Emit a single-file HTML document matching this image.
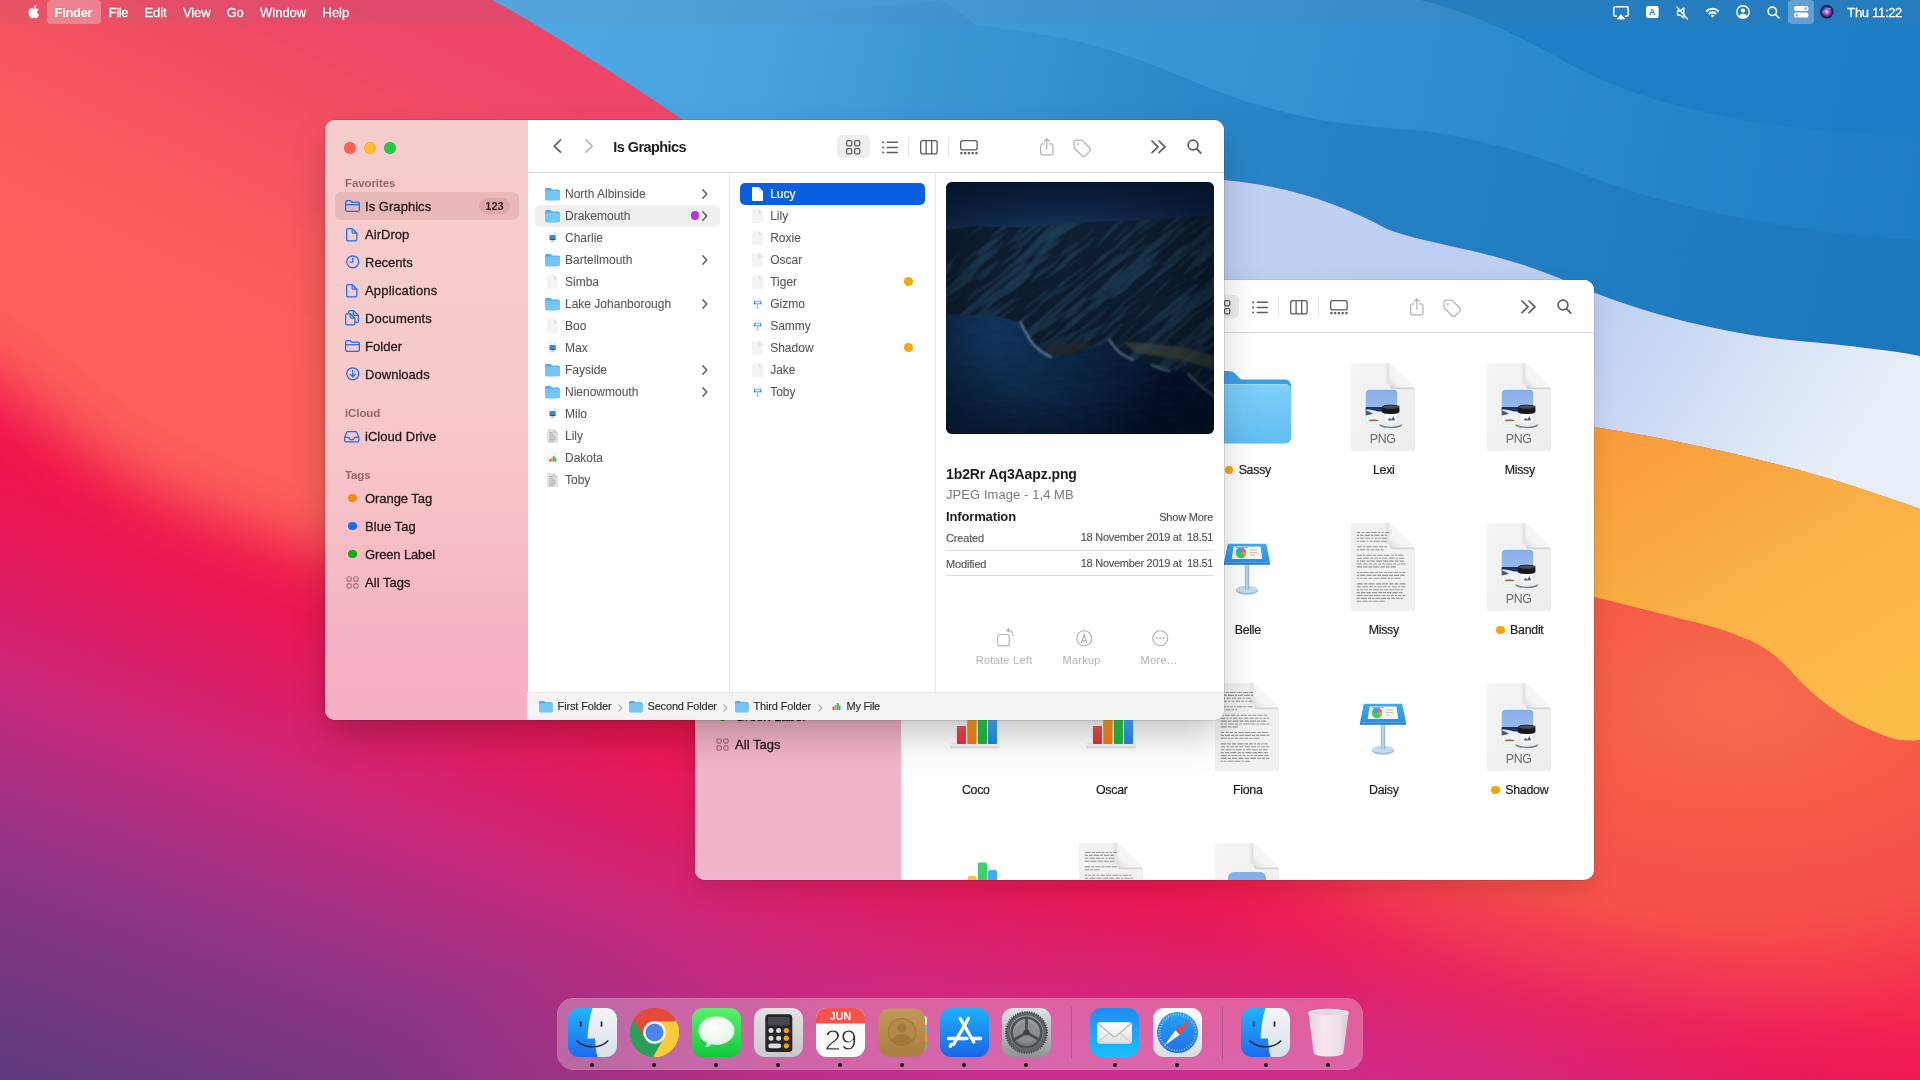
<!DOCTYPE html>
<html lang="en"><head><meta charset="utf-8"><title>Finder</title>
<style>
html,body{margin:0;padding:0;width:1920px;height:1080px;overflow:hidden;background:#e8205a;font-family:"Liberation Sans",sans-serif;}
#wall{position:absolute;left:0;top:0;}
</style>
<style>
*{box-sizing:border-box}
.abs{position:absolute}
#menubar{position:absolute;left:0;top:0;width:1920px;height:24px;background:rgba(120,120,140,0.10);color:#fff;font-size:13px;line-height:24px;white-space:nowrap}
#menubar span{position:absolute;top:0.5px;-webkit-text-stroke:0.3px #fff;text-shadow:0 0 2px rgba(0,0,0,0.12)}
#menubar .hl{position:absolute;background:rgba(255,255,255,0.28);border-radius:4px}
#menubar svg{position:absolute;overflow:visible}
.win{position:absolute;width:898.7px;height:600px;border-radius:10px;box-shadow:0 0 0 0.5px rgba(0,0,0,0.18),0 18px 38px -5px rgba(0,0,0,0.25),0 2px 8px rgba(0,0,0,0.04);overflow:hidden;background:#fff}
.sb{position:absolute;left:0;top:0;height:600px;font-size:13px;color:#241618;white-space:nowrap}
.sb .hd{position:absolute;left:20px;font-size:11.5px;font-weight:700;color:rgba(90,40,50,0.62);letter-spacing:-0.1px}
.sb .it{position:absolute;left:10px;width:184px;height:28px;border-radius:6px;line-height:28px}
.sb .it.sel{background:rgba(140,60,70,0.13)}
.sb .it span.t{position:absolute;left:30px;top:0.8px;-webkit-text-stroke:0.28px #241618;letter-spacing:0.04px}
.sb .it svg{position:absolute;overflow:visible}
.sb .badge{position:absolute;left:144px;top:6px;width:31px;height:16px;border-radius:8px;background:rgba(140,60,70,0.12);font-size:11px;line-height:16px;text-align:center;font-weight:700;color:#3a2428}
.sb .dot{position:absolute;left:13.2px;top:9.7px;width:8.7px;height:8.7px;border-radius:50%}
.tl{position:absolute;top:22px;width:12px;height:12px;border-radius:50%}
.tb{position:absolute;top:0;height:53px;background:#fff;border-bottom:1px solid #dedede}
.tb svg{position:absolute;overflow:visible}
.tb .title{position:absolute;top:18px;font-size:14.5px;font-weight:700;color:#1d1d1f;letter-spacing:-0.55px;line-height:18px;white-space:nowrap}
.tb .gbtn{position:absolute;left:310px;top:14.5px;width:32.5px;height:23.5px;border-radius:5px;background:#eeeeee}
.tb .sep{position:absolute;top:16.5px;width:1px;height:20px;background:#e2e2e2}
.col{position:absolute;top:53px;background:#fff}
.row{position:absolute;height:22px;line-height:22px;font-size:12px;color:#575757;white-space:nowrap}
.row .t{position:absolute;top:0;-webkit-text-stroke:0.08px #575757}
.row svg{position:absolute;overflow:visible}
.pv{font-size:11px;color:#555;white-space:nowrap}
.pv .k,.pv .v{position:absolute;-webkit-text-stroke:0.15px #555}
.pathbar{position:absolute;height:28px;background:#f4f4f4;border-top:1px solid #e9e9e9;font-size:11px;color:#2e2e2e;line-height:28px;white-space:nowrap}
.pathbar span{position:absolute;top:-1px;-webkit-text-stroke:0.15px #2e2e2e}
.pathbar svg{position:absolute;overflow:visible}
.ic{position:absolute}
.lbl{position:absolute;font-size:12.4px;letter-spacing:-0.28px;color:#1e1e1e;white-space:nowrap;line-height:16px;-webkit-text-stroke:0.2px #1e1e1e}
.lbl i{display:inline-block;width:8.5px;height:8.5px;border-radius:50%;background:#f5a60a;margin-right:5.5px;vertical-align:0.3px}
#dock{position:absolute;left:557px;top:998px;width:806px;height:72px;border-radius:17px;background:rgba(255,255,255,0.27);box-shadow:0 0 0 0.5px rgba(255,255,255,0.18) inset}
#dock .di{position:absolute;top:10px;width:49px;height:49px}
#dock .dd{position:absolute;top:65px;width:4px;height:4px;border-radius:50%;background:#111}
#dock .ds{position:absolute;top:9px;width:1px;height:52px;background:rgba(60,20,60,0.22)}
#w2{box-shadow:0 0 0 0.5px rgba(0,0,0,0.14),0 10px 28px -4px rgba(0,0,0,0.15)}
.win,#menubar,#dock{will-change:transform}
</style>
</head><body>
<svg id="wall" width="1920" height="1080" viewBox="0 0 1920 1080">
<defs>
  <linearGradient id="gBase" gradientUnits="userSpaceOnUse" x1="0" y1="1080" x2="235" y2="420.600">
    <stop offset="0" stop-color="#5c3a80"/>
    <stop offset="0.13" stop-color="#73387f"/>
    <stop offset="0.27" stop-color="#8a3583"/>
    <stop offset="0.40" stop-color="#a82f84"/>
    <stop offset="0.51" stop-color="#c42a7c"/>
    <stop offset="0.58" stop-color="#d22474"/>
    <stop offset="0.65" stop-color="#dc1e66"/>
    <stop offset="0.75" stop-color="#e81856"/>
    <stop offset="0.86" stop-color="#f0144a"/>
    <stop offset="0.95" stop-color="#f51a50"/>
    <stop offset="1" stop-color="#f3224e"/>
  </linearGradient>
  <radialGradient id="gMag" gradientUnits="userSpaceOnUse" cx="1180" cy="1130" r="260" gradientTransform="translate(1180 1130) scale(3.200 1) translate(-1180 -1130)">
    <stop offset="0" stop-color="#c8309a" stop-opacity="0.900"/>
    <stop offset="0.450" stop-color="#cc2e90" stop-opacity="0.600"/>
    <stop offset="0.750" stop-color="#d42a84" stop-opacity="0.250"/>
    <stop offset="1" stop-color="#d82880" stop-opacity="0"/>
  </radialGradient>
  
  <linearGradient id="gCoral" gradientUnits="userSpaceOnUse" x1="330" y1="-10" x2="170" y2="330">
    <stop offset="0" stop-color="#ee4469"/>
    <stop offset="0.300" stop-color="#f34e63"/>
    <stop offset="0.650" stop-color="#f95b5d"/>
    <stop offset="1" stop-color="#fb615a"/>
  </linearGradient>
  <linearGradient id="gBlue" gradientUnits="userSpaceOnUse" x1="500" y1="0" x2="1920" y2="300">
    <stop offset="0" stop-color="#52aae4"/>
    <stop offset="0.35" stop-color="#3f9ad8"/>
    <stop offset="0.7" stop-color="#2b8bce"/>
    <stop offset="1" stop-color="#1d7cc2"/>
  </linearGradient>
  <linearGradient id="gBandB" gradientUnits="userSpaceOnUse" x1="780" y1="0" x2="1300" y2="120">
    <stop offset="0" stop-color="#1a74b8" stop-opacity="0"/>
    <stop offset="0.500" stop-color="#1a74b8" stop-opacity="0.220"/>
    <stop offset="1" stop-color="#1a74b8" stop-opacity="0.520"/>
  </linearGradient>
  <linearGradient id="gLav" gradientUnits="userSpaceOnUse" x1="1300" y1="200" x2="1800" y2="520">
    <stop offset="0" stop-color="#bfd0f3"/>
    <stop offset="0.5" stop-color="#bccef2"/>
    <stop offset="1" stop-color="#e8eff8"/>
  </linearGradient>
  <linearGradient id="gOrange" gradientUnits="userSpaceOnUse" x1="1600" y1="430" x2="1800" y2="760">
    <stop offset="0" stop-color="#f89a3c"/>
    <stop offset="0.5" stop-color="#fab044"/>
    <stop offset="1" stop-color="#fcbc48"/>
  </linearGradient>
  <radialGradient id="gRed" gradientUnits="userSpaceOnUse" cx="1740" cy="700" r="400" gradientTransform="translate(1740 700) scale(1.700 1) translate(-1740 -700)">
    <stop offset="0" stop-color="#f56c4c"/>
    <stop offset="0.300" stop-color="#f65a49"/>
    <stop offset="0.550" stop-color="#f7504a"/>
    <stop offset="0.720" stop-color="#f53c4d" stop-opacity="0.850"/>
    <stop offset="0.880" stop-color="#f32450" stop-opacity="0.400"/>
    <stop offset="1" stop-color="#f01c55" stop-opacity="0"/>
  </radialGradient>
  <filter id="b30" x="-20%" y="-20%" width="140%" height="140%"><feGaussianBlur stdDeviation="30"/></filter>
  <filter id="b60" x="-30%" y="-30%" width="160%" height="160%"><feGaussianBlur stdDeviation="60"/></filter>
  <filter id="b20" filterUnits="userSpaceOnUse" x="-200" y="-200" width="1300" height="1100"><feGaussianBlur stdDeviation="30"/></filter>
  <filter id="b8" x="-10%" y="-10%" width="120%" height="120%"><feGaussianBlur stdDeviation="8"/></filter>
</defs>
<rect width="1920" height="1080" fill="url(#gBase)"/>

<!-- right red body -->
<rect x="700" y="100" width="1220" height="980" fill="url(#gRed)"/>
<rect x="0" y="700" width="1920" height="380" fill="url(#gMag)"/>
<!-- coral blob top-left -->
<path d="M-100 -100 L800 -100 L800 660 L440 660 C410 610 370 570 330 556 C300 546 268 538 244 528 C212 516 182 506 155 492 C125 476 100 460 80 444 C50 420 20 396 0 380 L-100 310Z" fill="url(#gCoral)" filter="url(#b20)"/>
<!-- blue -->
<path d="M492 0 C540 26 600 64 683 120 L900 300 L1224 180 C1290 186 1340 204 1387 229 C1430 246 1500 250 1575 285 C1640 312 1720 334 1800 341 C1850 346 1890 350 1920 356 L1920 0Z" fill="url(#gBlue)"/>
<!-- blue layers -->
<path d="M1421 0 C1470 12 1520 36 1575 67 C1620 90 1660 102 1700 111 C1780 130 1860 134 1920 137 L1920 0Z" fill="#1c7cc4" opacity="0.85"/>
<path d="M940 0 C960 12 970 20 975 24 C1010 30 1050 34 1092 45 C1140 58 1180 76 1217 91 C1250 104 1290 114 1320 120 C1360 126 1390 128 1425 131 C1480 140 1520 150 1560 165 C1640 198 1720 216 1800 228 C1850 236 1890 238 1920 240 L1920 356 C1890 350 1850 346 1800 341 C1720 334 1640 312 1575 285 C1500 250 1430 246 1387 229 C1340 204 1290 186 1224 180 L900 300 L683 120 L560 40Z" fill="url(#gBandB)"/>
<!-- lavender -->
<path d="M1100 170 L1224 180 C1290 186 1340 204 1387 229 C1430 246 1500 250 1575 285 C1640 312 1720 334 1800 341 C1850 346 1890 350 1920 356 L1920 509 C1890 498 1870 492 1856 487 C1810 472 1770 462 1722 451 C1680 442 1640 434 1594 427 L1100 427Z" fill="url(#gLav)"/>
<!-- orange -->
<path d="M1100 400 L1594 427 C1640 434 1680 442 1722 451 C1770 462 1810 472 1856 487 C1870 492 1890 498 1920 509 L1920 740 C1900 742 1890 738 1878 733 C1860 726 1845 718 1833 709 C1815 696 1802 684 1789 669 C1775 654 1762 645 1744 638 C1720 628 1700 623 1678 618 C1650 611 1620 603 1594 597 L1100 597Z" fill="url(#gOrange)"/>
</svg>
<div id="menubar">
<div class="hl" style="left:47px;top:0;width:53.5px;height:24px"></div>
<svg style="left:28px;top:5px" width="11.5" height="14.2" viewBox="0 0 384 512"><path fill="#fff" transform="translate(0 -32) scale(1 1.06)" d="M318.7 268.7c-.2-36.700 16.400-64.400 50-84.800-18.800-26.900-47.200-41.700-84.700-44.600-35.500-2.800-74.300 20.700-88.500 20.700-15 0-49.400-19.700-76.400-19.700C63.300 141.200 4 184.800 4 273.500q0 39.300 14.400 81.200c12.800 36.700 59 126.700 107.200 125.200 25.200-.6 43-17.900 75.800-17.900 31.800 0 48.300 17.900 76.400 17.900 48.600-.7 90.400-82.500 102.600-119.300-65.200-30.700-61.700-90-61.700-91.900zm-56.600-164.200c27.300-32.400 24.800-61.900 24-72.500-24.100 1.400-52 16.400-67.900 34.900-17.500 19.800-27.800 44.300-25.600 71.900 26.100 2 49.900-11.400 69.500-34.300z"/></svg>
<span style="left:54.6px;font-weight:700;letter-spacing:-0.33px;-webkit-text-stroke:0">Finder</span>
<span style="left:108.7px;letter-spacing:-0.35px">File</span>
<span style="left:144.6px;letter-spacing:-0.15px">Edit</span>
<span style="left:182.9px;letter-spacing:-0.1px">View</span>
<span style="left:226.7px;letter-spacing:-0.4px">Go</span>
<span style="left:260px">Window</span>
<span style="left:322.5px">Help</span>
<!-- right icons -->
<svg style="left:1612.5px;top:5.5px" width="16" height="14" viewBox="0 0 16 14" fill="none" stroke="#fff" stroke-width="1.5" stroke-linejoin="round"><path d="M4 10.2H2.2c-.8 0-1.400-.6-1.400-1.400V2.200c0-.8.600-1.400 1.400-1.400h11.600c.8 0 1.400.6 1.400 1.400v6.600c0 .8-.6 1.400-1.400 1.400H12"/><path d="M8 8.400l3.600 4.600H4.400z" fill="#fff" stroke-width="0.8"/></svg>
<svg style="left:1645.8px;top:6.3px" width="12.6" height="12" viewBox="0 0 12.6 12"><rect width="12.6" height="12" rx="2.200" fill="#fff"/><text x="6.3" y="9.300" text-anchor="middle" font-family="Liberation Sans, sans-serif" font-size="8.500" font-weight="700" fill="#2a82c8">A</text></svg>
<svg style="left:1676px;top:5.500px" width="13" height="14" viewBox="0 0 13 14" fill="none" stroke="#fff" stroke-width="1.300" stroke-linejoin="round" stroke-linecap="round"><path d="M1.500 5h2.500l3.800-3v10l-3.800-3H1.500z"/><path d="M1 1l10.500 12" stroke-width="1.200"/></svg>
<svg style="left:1704.5px;top:6.800px" width="15" height="11" viewBox="0 0 15 11" fill="none" stroke="#fff" stroke-width="2.100" stroke-linecap="butt"><path d="M1.300 4.400a8.700 8.700 0 0 1 12.400 0"/><path d="M3.850 6.900a5.100 5.100 0 0 1 7.300 0"/><path d="M7.500 10.600L5.700 8.600a2.600 2.600 0 0 1 3.600 0z" fill="#fff" stroke="none"/></svg>
<svg style="left:1736px;top:5px" width="14" height="14" viewBox="0 0 14 14" fill="none" stroke="#fff" stroke-width="1.400"><circle cx="7" cy="7" r="6.200"/><circle cx="7" cy="5.500" r="2.100" fill="#fff" stroke="none"/><path d="M2.900 11.300c.8-1.900 2.300-2.800 4.100-2.800s3.300.9 4.100 2.800c-1.100 1-2.500 1.600-4.100 1.600s-3-.6-4.100-1.600z" fill="#fff" stroke="none"/></svg>
<svg style="left:1767px;top:5.500px" width="13" height="13" viewBox="0 0 13 13" fill="none" stroke="#fff" stroke-width="1.600" stroke-linecap="round"><circle cx="5.300" cy="5.300" r="4.200"/><path d="M8.500 8.500l3.500 3.500"/></svg>
<div class="hl" style="left:1788px;top:0;width:26px;height:24px"></div>
<svg style="left:1793.7px;top:6.300px" width="14.500" height="11.500" viewBox="0 0 14.500 11.500"><rect x="0" y="0" width="14.500" height="5.100" rx="2.550" fill="#fff"/><rect x="0" y="6.400" width="14.500" height="5.100" rx="2.550" fill="#fff"/><circle cx="11.700" cy="2.550" r="1.500" fill="#8fbfe3"/><circle cx="2.800" cy="8.950" r="1.500" fill="#8fbfe3"/></svg>
<svg style="left:1819.500px;top:5.200px" width="13.500" height="13.500" viewBox="0 0 14 14"><defs><radialGradient id="siri" cx="0.500" cy="0.500" r="0.500"><stop offset="0" stop-color="#f2f2ff"/><stop offset="0.250" stop-color="#ff5fa0"/><stop offset="0.550" stop-color="#7a3fd0"/><stop offset="0.800" stop-color="#1e2a6a"/><stop offset="1" stop-color="#1a1a3a"/></radialGradient></defs><circle cx="7" cy="7" r="7" fill="#1b1b40"/><circle cx="7" cy="7" r="6.800" fill="url(#siri)"/><path d="M2.500 8.500c2-3 4.500-4.500 9-5" stroke="#40d0ff" stroke-width="1.200" fill="none" opacity="0.700"/></svg>
<span style="left:1847.300px;letter-spacing:-0.32px">Thu 11:22</span>
</div>
<div class="win" id="w2" style="left:695px;top:280px">
<svg width="0" height="0" style="position:absolute"><defs>
<linearGradient id="docg" x1="0" y1="0" x2="1" y2="1"><stop offset="0" stop-color="#f4f4f4"/><stop offset="1" stop-color="#ededed"/></linearGradient>
<linearGradient id="foldg" x1="0" y1="1" x2="1" y2="0"><stop offset="0" stop-color="#d8d8d8"/><stop offset="0.250" stop-color="#f3f3f3"/><stop offset="1" stop-color="#ffffff"/></linearGradient>
<linearGradient id="fedge" x1="0" y1="0" x2="1" y2="0"><stop offset="0" stop-color="#000" stop-opacity="0"/><stop offset="1" stop-color="#000" stop-opacity="0.080"/></linearGradient>
<linearGradient id="fold1" x1="0" y1="0" x2="0" y2="1"><stop offset="0" stop-color="#3f9fe6"/><stop offset="1" stop-color="#3a98e0"/></linearGradient>
<linearGradient id="fold2" x1="0" y1="0" x2="0" y2="1"><stop offset="0" stop-color="#7dd0fa"/><stop offset="1" stop-color="#62bdf3"/></linearGradient>
<linearGradient id="kn1" x1="0" y1="0" x2="0" y2="1"><stop offset="0" stop-color="#42a9f2"/><stop offset="1" stop-color="#2a8fe3"/></linearGradient>
<linearGradient id="kn2" x1="0" y1="0" x2="1" y2="0"><stop offset="0" stop-color="#8eb4cf"/><stop offset="0.500" stop-color="#c8dcea"/><stop offset="1" stop-color="#86a9c4"/></linearGradient>
<linearGradient id="br" x1="0" y1="0" x2="0" y2="1"><stop offset="0" stop-color="#f0575a"/><stop offset="1" stop-color="#ea2c34"/></linearGradient>
<linearGradient id="bo" x1="0" y1="0" x2="0" y2="1"><stop offset="0" stop-color="#f7a928"/><stop offset="1" stop-color="#f47a14"/></linearGradient>
<linearGradient id="bg" x1="0" y1="0" x2="0" y2="1"><stop offset="0" stop-color="#3fd45e"/><stop offset="1" stop-color="#1db63a"/></linearGradient>
<linearGradient id="bb" x1="0" y1="0" x2="0" y2="1"><stop offset="0" stop-color="#4fb4f8"/><stop offset="1" stop-color="#2082f0"/></linearGradient>
<linearGradient id="pvs" x1="0" y1="0" x2="0" y2="1"><stop offset="0" stop-color="#86aee8"/><stop offset="1" stop-color="#a9c6f0"/></linearGradient>
</defs></svg>
<div class="sb" style="width:205.6px;background:linear-gradient(180deg,#f6c6d2 0%,#f4b8c9 40%,#f3b2c6 70%,#f1b5cc 100%)">
<div class="tl" style="left:19.3px;background:#fe5f57;box-shadow:0 0 0 0.5px rgba(0,0,0,0.12) inset"></div>
<div class="tl" style="left:39.3px;background:#febc2e;box-shadow:0 0 0 0.5px rgba(0,0,0,0.12) inset"></div>
<div class="tl" style="left:59.3px;background:#28c840;box-shadow:0 0 0 0.5px rgba(0,0,0,0.12) inset"></div>
<div class="hd" style="top:58.5px;line-height:15px">Favorites</div>
<div class="it sel" style="top:74.5px"><svg style="left:9.5px;top:8px" width="15" height="12" viewBox="0 0 15 12" fill="none" stroke="#1d6cf2" stroke-width="1.250" stroke-linejoin="round"><path d="M.65 2.100c0-.8.650-1.450 1.450-1.450h2.700c.5 0 .9.200 1.200.55l.7.850h6.200c.8 0 1.450.65 1.450 1.450v6.400c0 .8-.65 1.450-1.450 1.450H2.100c-.8 0-1.450-.65-1.450-1.450z"/><path d="M.65 4.700h13.700"/></svg><span class="t">Is Graphics</span><div class="badge">123</div></div>
<div class="it" style="top:102.5px"><svg style="left:11.3px;top:7.5px" width="11.500" height="13.500" viewBox="0 0 11.500 13.500" fill="none" stroke="#1d6cf2" stroke-width="1.250" stroke-linejoin="round"><path d="M.65 2.100c0-.8.650-1.450 1.450-1.450h4.200l4.550 4.550v6.200c0 .8-.65 1.450-1.450 1.450H2.100c-.8 0-1.450-.65-1.450-1.450z"/><path d="M6.100.85v3.100c0 .7.500 1.200 1.200 1.200h3.300"/></svg><span class="t">AirDrop</span></div>
<div class="it" style="top:130.5px"><svg style="left:10.5px;top:7.3px" width="13.500" height="13.500" viewBox="0 0 13.500 13.500" fill="none" stroke="#1d6cf2" stroke-width="1.250" stroke-linecap="round" stroke-linejoin="round"><circle cx="6.750" cy="6.750" r="6"/><path d="M6.750 3.200v3.800H3.900"/></svg><span class="t" style="letter-spacing:0.0px">Recents</span></div>
<div class="it" style="top:158.5px"><svg style="left:11.3px;top:7.5px" width="11.500" height="13.500" viewBox="0 0 11.500 13.500" fill="none" stroke="#1d6cf2" stroke-width="1.250" stroke-linejoin="round"><path d="M.65 2.100c0-.8.650-1.450 1.450-1.450h4.200l4.550 4.550v6.200c0 .8-.65 1.450-1.450 1.450H2.100c-.8 0-1.450-.65-1.450-1.450z"/><path d="M6.100.85v3.100c0 .7.500 1.200 1.200 1.200h3.300"/></svg><span class="t" style="letter-spacing:0.2px">Applications</span></div>
<div class="it" style="top:186.5px"><svg style="left:10px;top:6.3px" width="14" height="15.500" viewBox="0 0 14 15.500" fill="none" stroke="#1d6cf2" stroke-width="1.250" stroke-linejoin="round"><path d="M3.600 3.300V2.100c0-.8.650-1.450 1.450-1.450h3.500l4.800 4.800v5.500c0 .8-.65 1.450-1.450 1.450H10"/><path d="M8.300.85v3.200c0 .7.500 1.200 1.200 1.200h3.600"/><path d="M.65 5.200c0-.8.650-1.450 1.450-1.450h3.300L9.900 8.200v5.200c0 .8-.65 1.450-1.450 1.450H2.100c-.8 0-1.450-.65-1.450-1.450z"/><path d="M5.200 4v3c0 .7.500 1.200 1.200 1.200h3.300"/></svg><span class="t" style="letter-spacing:0.14px">Documents</span></div>
<div class="it" style="top:214.5px"><svg style="left:9.5px;top:8px" width="15" height="12" viewBox="0 0 15 12" fill="none" stroke="#1d6cf2" stroke-width="1.250" stroke-linejoin="round"><path d="M.65 2.100c0-.8.650-1.450 1.450-1.450h2.700c.5 0 .9.200 1.200.55l.7.850h6.200c.8 0 1.450.65 1.450 1.450v6.400c0 .8-.65 1.450-1.450 1.450H2.100c-.8 0-1.450-.65-1.450-1.450z"/><path d="M.65 4.700h13.700"/></svg><span class="t">Folder</span></div>
<div class="it" style="top:242.5px"><svg style="left:10.5px;top:7.3px" width="13.500" height="13.500" viewBox="0 0 13.500 13.500" fill="none" stroke="#1d6cf2" stroke-width="1.250" stroke-linecap="round" stroke-linejoin="round"><circle cx="6.750" cy="6.750" r="6"/><path d="M6.750 3.500v6.200M4.200 7.300l2.550 2.550L9.300 7.300"/></svg><span class="t">Downloads</span></div>
<div class="hd" style="top:288.5px;line-height:15px">iCloud</div>
<div class="it" style="top:304.5px"><svg style="left:9.3px;top:8.5px" width="15.500" height="11.500" viewBox="0 0 15.500 11.500" fill="none" stroke="#1d6cf2" stroke-width="1.250" stroke-linejoin="round"><path d="M.65 6.400L2.600 1.600c.25-.6.750-.95 1.400-.95h7.500c.65 0 1.150.35 1.400.95l1.950 4.800v3c0 .8-.65 1.450-1.450 1.450H2.100c-.8 0-1.450-.65-1.450-1.450z"/><path d="M.8 6.300h3.400c.5 0 .8.300.9.700.3 1.100 1.300 1.800 2.650 1.800s2.350-.7 2.650-1.800c.1-.4.400-.7.900-.7h3.400"/></svg><span class="t">iCloud Drive</span></div>
<div class="hd" style="top:350.5px;line-height:15px">Tags</div>
<div class="it" style="top:366.5px"><div class="dot" style="background:#f08c14"></div><span class="t" style="letter-spacing:-0.06px">Orange Tag</span></div>
<div class="it" style="top:394.5px"><div class="dot" style="background:#1a6cf6"></div><span class="t">Blue Tag</span></div>
<div class="it" style="top:422.5px"><div class="dot" style="background:#17a81c"></div><span class="t" style="letter-spacing:-0.14px">Green Label</span></div>
<div class="it" style="top:450.5px"><svg style="left:10.7px;top:7.7px" width="13" height="13" viewBox="0 0 13 13" fill="none" stroke="#a87280" stroke-width="1.100"><circle cx="3.100" cy="3.100" r="2.300"/><circle cx="9.900" cy="3.100" r="2.300"/><circle cx="3.100" cy="9.900" r="2.300"/><circle cx="9.900" cy="9.900" r="2.300"/></svg><span class="t">All Tags</span></div>
</div>
<div class="tb" style="left:205.6px;width:693.4px">
<svg style="left:22.599999999999994px;top:18.700px" width="8.500" height="14.200" viewBox="0 0 8.500 14.200" fill="none" stroke="#5c5c5c" stroke-width="1.700" stroke-linecap="round" stroke-linejoin="round"><path d="M7.500 1L1.200 7.100l6.300 6.100"/></svg>
<svg style="left:53.900000000000006px;top:18.700px" width="8.500" height="14.200" viewBox="0 0 8.500 14.200" fill="none" stroke="#b6b6b6" stroke-width="1.700" stroke-linecap="round" stroke-linejoin="round"><path d="M1 1l6.300 6.100L1 13.200"/></svg>
<div class="title" style="left:82.6px">Is Graphics</div>
<div class="gbtn" style="left:306.4px"></div>
<svg style="left:315.4px;top:19.600px" width="14.400" height="14.600" viewBox="0 0 14.400 14.600" fill="none" stroke="#5c5c5c" stroke-width="1.250"><rect x=".65" y=".65" width="5.100" height="5.200" rx="1.200"/><rect x="8.650" y=".65" width="5.100" height="5.200" rx="1.200"/><rect x=".65" y="8.750" width="5.100" height="5.200" rx="1.200"/><rect x="8.650" y="8.750" width="5.100" height="5.200" rx="1.200"/></svg>
<svg style="left:351.0px;top:20.600px" width="16" height="13" viewBox="0 0 16 13" stroke="#5c5c5c" stroke-width="1.500" stroke-linecap="round"><path d="M5.300 1.200h10M5.300 6.400h10M5.300 11.600h10"/><circle cx="1.100" cy="1.200" r="1" fill="#5c5c5c" stroke="none"/><circle cx="1.100" cy="6.400" r="1" fill="#5c5c5c" stroke="none"/><circle cx="1.100" cy="11.600" r="1" fill="#5c5c5c" stroke="none"/></svg>
<div class="sep" style="left:377.69999999999993px"></div>
<svg style="left:389.29999999999995px;top:19.700px" width="17.800" height="14.600" viewBox="0 0 17.800 14.600" fill="none" stroke="#5c5c5c" stroke-width="1.300"><rect x=".65" y=".65" width="16.500" height="13.300" rx="2.200"/><path d="M6.100.65v13.300M11.700.65v13.300"/></svg>
<div class="sep" style="left:417.69999999999993px"></div>
<svg style="left:429.29999999999995px;top:19.900px" width="17.800" height="14.400" viewBox="0 0 17.800 14.400" fill="none" stroke="#5c5c5c" stroke-width="1.300"><rect x=".65" y=".65" width="16.500" height="9.200" rx="2.200"/><g fill="#5c5c5c" stroke="none"><rect x=".3" y="12" width="2.200" height="2.200" rx=".5"/><rect x="4.050" y="12" width="2.200" height="2.200" rx=".5"/><rect x="7.800" y="12" width="2.200" height="2.200" rx=".5"/><rect x="11.550" y="12" width="2.200" height="2.200" rx=".5"/><rect x="15.300" y="12" width="2.200" height="2.200" rx=".5"/></g></svg>
<svg style="left:509.0px;top:17.500px" width="13.600" height="17.600" viewBox="0 0 13.600 17.600" fill="none" stroke="#b4b4b4" stroke-width="1.250" stroke-linecap="round" stroke-linejoin="round"><path d="M4.200 5.900H2.400c-1 0-1.750.75-1.750 1.750v7.500c0 1 .75 1.750 1.750 1.750h8.800c1 0 1.750-.75 1.750-1.750v-7.500c0-1-.75-1.750-1.750-1.750H9.400"/><path d="M6.800 11.200V.9M4.300 3.300L6.800.8l2.500 2.500"/></svg>
<svg style="left:542.4px;top:18.500px" width="18.500" height="18.500" viewBox="0 0 18.500 18.500" fill="none" stroke="#b4b4b4" stroke-width="1.250" stroke-linejoin="round"><path d="M1 3.200C1 2 2 1 3.200 1h4.500c.7 0 1.300.25 1.800.75l7.300 7.300c.9.900.9 2.200 0 3.100l-4.650 4.650c-.9.900-2.200.9-3.100 0l-7.300-7.300C1.250 9 1 8.400 1 7.700z"/><circle cx="5" cy="5" r="1" fill="#b4b4b4" stroke="none"/></svg>
<svg style="left:620.0px;top:20px" width="15" height="13.600" viewBox="0 0 15 13.600" fill="none" stroke="#5c5c5c" stroke-width="1.700" stroke-linecap="round" stroke-linejoin="round"><path d="M1 1l6 5.800-6 5.800M8 1l6 5.800-6 5.800"/></svg>
<svg style="left:656.4px;top:19.200px" width="15" height="15.200" viewBox="0 0 15 15.200" fill="none" stroke="#5c5c5c" stroke-width="1.750" stroke-linecap="round"><circle cx="6" cy="6" r="4.900"/><path d="M9.700 9.900l4.200 4.200"/></svg>
</div>
<svg class="ic" style="left:508px;top:90.5px" width="88" height="73" viewBox="0 0 88 73"><path d="M0 6C0 2.700 2.700 0 6 0h20c2.500 0 4.300.8 6 2.500l4.500 4.500c1 1 2 1.500 3.500 1.500H82c3.300 0 6 2.700 6 6V66c0 3.300-2.700 6-6 6H6c-3.300 0-6-2.700-6-6z" fill="url(#fold1)"/><path d="M0 19c0-3.300 2.700-6 6-6h76c3.300 0 6 2.700 6 6v47.500c0 3.300-2.700 6-6 6H6c-3.300 0-6-2.700-6-6z" fill="url(#fold2)"/><path d="M0 19c0-3.300 2.700-6 6-6h76c3.300 0 6 2.700 6 6v.8c0-3.300-2.700-6-6-6H6c-3.300 0-6 2.700-6 6z" fill="#a5e0fc"/></svg>
<div class="lbl" style="left:492.8px;top:182.3px;width:120px;text-align:center"><i></i>Sassy</div>
<svg class="ic" style="left:656px;top:83px" width="64" height="88" viewBox="0 0 64 88"><path d="M0 1.500C0 .67.670 0 1.500 0H38.500L64 24.500V86.500c0 .83-.67 1.500-1.500 1.500H1.500C.67 88 0 87.330 0 86.500z" fill="url(#docg)"/><g transform="translate(13.500 25.500)"><rect x="0" y="0" width="34" height="37" rx="5" fill="#f6f6f6"/><rect x="1.200" y="1.200" width="31.600" height="34.600" rx="4" fill="url(#pvs)"/><path d="M1.200 18.500h31.600v4.500H1.200z" fill="#1d2f80"/><path d="M1.200 21.500c4-1.200 8 .5 12 1.500 5 1.200 12 .5 19.600.2v8.600c0 2.200-1.800 4-4 4H5.200c-2.200 0-4-1.800-4-4z" fill="#eef3f8"/><path d="M1.200 22c3 .5 6 2 7 3.500l-7 1.500z" fill="#4a5a78"/><path d="M4 31.500c3-1 7-1.200 10 0l-1 1.200H5z" fill="#a87830"/><g transform="translate(-1.800 -2.600) scale(1.120)"><path d="M18.500 22.500l-3.500 12.500c0 1.800 4.500 2.800 10 2.800s10-1 10-2.800L31.500 22.500z" fill="#e9ecef"/><path d="M15.200 34c2 1.600 6 2.400 9.800 2.400s7.800-.8 9.800-2.400l.2 1c0 1.800-4.500 2.800-10 2.800s-10-1-10-2.800z" fill="#7d848c"/><rect x="20" y="25.500" width="10" height="7" fill="#fff"/><path d="M22 31l2-2.500 1.500 1.500 2-3 1.500 4z" fill="#4a5f8a"/><path d="M17.200 18.800c0-1.200 3.400-2 7.800-2s7.800.8 7.800 2v4.200c0 1.200-3.400 2-7.800 2s-7.800-.8-7.800-2z" fill="#17181a"/><ellipse cx="25" cy="18.900" rx="7.300" ry="1.600" fill="#4a4d52"/></g></g><rect x="33.500" y="0" width="5" height="21" fill="url(#fedge)"/><path d="M38.500 0L64 24.500H41.500c-1.700 0-3-1.300-3-3z" fill="rgba(0,0,0,0.110)" transform="translate(0.400 1.800)"/><path d="M38.500 0L64 24.500H41.500c-1.700 0-3-1.300-3-3z" fill="url(#foldg)"/></svg><div class="abs" style="left:656px;top:152.4px;width:63.400px;text-align:center;font-size:12.300px;line-height:14px;color:#6a6a6a;letter-spacing:-0.2px">PNG</div>
<div class="lbl" style="left:628.8px;top:182.3px;width:120px;text-align:center">Lexi</div>
<svg class="ic" style="left:792px;top:83px" width="64" height="88" viewBox="0 0 64 88"><path d="M0 1.500C0 .67.670 0 1.500 0H38.500L64 24.500V86.500c0 .83-.67 1.500-1.500 1.500H1.500C.67 88 0 87.330 0 86.500z" fill="url(#docg)"/><g transform="translate(13.500 25.500)"><rect x="0" y="0" width="34" height="37" rx="5" fill="#f6f6f6"/><rect x="1.200" y="1.200" width="31.600" height="34.600" rx="4" fill="url(#pvs)"/><path d="M1.200 18.500h31.600v4.500H1.200z" fill="#1d2f80"/><path d="M1.200 21.500c4-1.200 8 .5 12 1.500 5 1.200 12 .5 19.600.2v8.600c0 2.200-1.800 4-4 4H5.200c-2.200 0-4-1.800-4-4z" fill="#eef3f8"/><path d="M1.200 22c3 .5 6 2 7 3.500l-7 1.500z" fill="#4a5a78"/><path d="M4 31.500c3-1 7-1.200 10 0l-1 1.200H5z" fill="#a87830"/><g transform="translate(-1.800 -2.600) scale(1.120)"><path d="M18.500 22.500l-3.500 12.500c0 1.800 4.500 2.800 10 2.800s10-1 10-2.800L31.500 22.500z" fill="#e9ecef"/><path d="M15.200 34c2 1.600 6 2.400 9.800 2.400s7.800-.8 9.800-2.400l.2 1c0 1.800-4.500 2.800-10 2.800s-10-1-10-2.800z" fill="#7d848c"/><rect x="20" y="25.500" width="10" height="7" fill="#fff"/><path d="M22 31l2-2.500 1.500 1.500 2-3 1.500 4z" fill="#4a5f8a"/><path d="M17.200 18.800c0-1.200 3.400-2 7.800-2s7.800.8 7.800 2v4.200c0 1.200-3.400 2-7.800 2s-7.800-.8-7.800-2z" fill="#17181a"/><ellipse cx="25" cy="18.900" rx="7.300" ry="1.600" fill="#4a4d52"/></g></g><rect x="33.500" y="0" width="5" height="21" fill="url(#fedge)"/><path d="M38.500 0L64 24.500H41.500c-1.700 0-3-1.300-3-3z" fill="rgba(0,0,0,0.110)" transform="translate(0.400 1.800)"/><path d="M38.500 0L64 24.500H41.500c-1.700 0-3-1.300-3-3z" fill="url(#foldg)"/></svg><div class="abs" style="left:792px;top:152.4px;width:63.400px;text-align:center;font-size:12.300px;line-height:14px;color:#6a6a6a;letter-spacing:-0.2px">PNG</div>
<div class="lbl" style="left:764.8px;top:182.3px;width:120px;text-align:center">Missy</div>
<svg class="ic" style="left:528px;top:263px" width="48" height="54" viewBox="0 0 48 54"><ellipse cx="24" cy="47.500" rx="11.300" ry="4.200" fill="#9fc0d8"/><ellipse cx="24" cy="46.300" rx="11" ry="3.600" fill="#c5dcec"/><rect x="21.800" y="20" width="4.400" height="26.500" fill="url(#kn2)"/><path d="M4.800 .8h38.400L47 19.500H1z" fill="url(#kn1)"/><path d="M1 19.500h46v2.200H1z" fill="#1f7fd2"/><path d="M10.500 3.500h27l1.800 12.500H8.700z" fill="#f4f8fc"/><circle cx="18" cy="10" r="5.200" fill="#3ecb5e"/><path d="M18 10V4.800a5.200 5.200 0 0 1 5 3.800z" fill="#f2549a"/><path d="M18 10l5-1.400a5.200 5.200 0 0 1-.8 4.600z" fill="#f6a020"/><path d="M18 10V4.800a5.200 5.200 0 0 0-4.800 3.200z" fill="#39a0f0"/><path d="M27 7h7M27 9.500h7M27 12h5" stroke="#d0b8b0" stroke-width="1"/><path d="M13 4.600h12" stroke="#9aa4b0" stroke-width="0.900"/></svg>
<div class="lbl" style="left:492.8px;top:342.3px;width:120px;text-align:center">Belle</div>
<svg class="ic" style="left:656px;top:243px" width="64" height="88" viewBox="0 0 64 88"><path d="M0 1.500C0 .67.670 0 1.500 0H38.500L64 24.500V86.500c0 .83-.67 1.500-1.500 1.500H1.500C.67 88 0 87.330 0 86.500z" fill="#f1f1f1"/><path d="M5.8 9.5h3.6M10.5 9.5h3.0M14.6 9.5h4.4M20.1 9.5h6.0M27.2 9.5h2.2M30.5 9.5h2.2M33.8 9.5h4.2M5.8 12.4h2.2M9.1 12.4h3.6M13.8 12.4h5.2M20.1 12.4h2.2M23.4 12.4h5.2M29.7 12.4h3.0M33.8 12.4h2.2M5.8 15.3h2.2M9.1 15.3h4.4M14.6 15.3h4.4M20.1 15.3h2.2M23.4 15.3h3.0M27.5 15.3h2.2M30.8 15.3h5.2M5.8 18.2h2.2M9.1 18.2h5.2M15.4 18.2h2.2M18.7 18.2h3.0M22.8 18.2h6.0M29.9 18.2h6.0M5.8 23.8h5.2M12.1 23.8h2.2M15.4 23.8h5.2M21.7 23.8h5.2M28.0 23.8h4.4M33.5 23.8h2.2M5.8 26.7h2.2M9.1 26.7h5.2M15.4 26.7h3.0M19.5 26.7h3.6M24.2 26.7h4.4M29.7 26.7h3.0M5.8 32.3h5.2M12.1 32.3h2.2M15.4 32.3h5.2M21.7 32.3h3.6M26.4 32.3h5.2M32.7 32.3h6.0M39.8 32.3h3.0M43.9 32.3h2.2M47.2 32.3h5.2M5.8 35.2h5.2M12.1 35.2h6.0M19.2 35.2h3.0M23.3 35.2h3.6M28.0 35.2h2.2M31.3 35.2h5.2M37.6 35.2h6.0M44.7 35.2h2.2M48.0 35.2h5.2M5.8 38.1h2.2M9.1 38.1h5.2M15.4 38.1h3.0M19.5 38.1h4.4M25.0 38.1h6.0M32.1 38.1h5.2M38.4 38.1h4.4M43.9 38.1h3.6M48.6 38.1h4.4M5.8 41.0h5.2M12.1 41.0h4.4M17.6 41.0h3.6M22.3 41.0h3.6M27.0 41.0h3.0M31.1 41.0h3.0M35.2 41.0h6.0M42.3 41.0h3.0M46.4 41.0h2.2M49.7 41.0h4.6M5.8 43.9h5.2M12.1 43.9h4.4M17.6 43.9h3.6M22.3 43.9h6.0M29.4 43.9h4.4M34.9 43.9h3.6M39.6 43.9h5.2M5.8 49.5h2.2M9.1 49.5h2.2M12.4 49.5h5.2M18.7 49.5h4.4M24.2 49.5h3.0M28.3 49.5h3.6M33.0 49.5h3.0M37.1 49.5h4.4M42.6 49.5h4.4M48.1 49.5h2.2M51.4 49.5h2.9M5.8 52.4h2.2M9.1 52.4h5.2M15.4 52.4h5.2M21.7 52.4h3.6M26.4 52.4h3.6M31.1 52.4h6.0M38.2 52.4h3.6M42.9 52.4h5.2M49.2 52.4h4.4M5.8 55.3h2.2M9.1 55.3h2.2M12.4 55.3h3.6M17.1 55.3h4.4M22.6 55.3h6.0M29.7 55.3h6.0M36.8 55.3h2.2M40.1 55.3h2.2M43.4 55.3h6.0M5.8 60.9h6.0M12.9 60.9h3.6M17.6 60.9h6.0M24.7 60.9h5.2M31.0 60.9h6.0M38.1 60.9h4.4M43.6 60.9h3.6M48.3 60.9h6.0M5.8 63.8h4.4M11.3 63.8h6.0M18.4 63.8h3.6M23.1 63.8h2.2M26.4 63.8h4.4M31.9 63.8h3.6M36.6 63.8h3.0M40.7 63.8h5.2M47.0 63.8h2.2M50.3 63.8h4.0M5.8 66.7h2.2M9.1 66.7h3.0M13.2 66.7h3.6M17.9 66.7h3.0M22.0 66.7h6.0M29.1 66.7h3.0M33.2 66.7h4.4M38.7 66.7h4.4M44.2 66.7h4.4M49.7 66.7h2.2M5.8 69.6h3.0M9.9 69.6h4.4M15.4 69.6h4.4M20.9 69.6h5.2M27.2 69.6h3.6M31.9 69.6h3.0M36.0 69.6h4.4M41.5 69.6h5.2M47.8 69.6h3.6M5.8 72.5h6.0M12.9 72.5h4.4M18.4 72.5h3.6M23.1 72.5h6.0M30.2 72.5h4.4M35.7 72.5h3.0M39.8 72.5h3.0M43.9 72.5h2.2M47.2 72.5h3.0M51.3 72.5h3.0M5.8 75.4h3.0M9.9 75.4h6.0M17.0 75.4h3.0M21.1 75.4h2.2M24.4 75.4h4.4M29.9 75.4h5.2M36.2 75.4h3.0M40.3 75.4h3.6M45.0 75.4h3.6M49.7 75.4h2.2M5.8 78.3h4.4M11.3 78.3h5.2M17.6 78.3h3.6M22.3 78.3h5.2M28.6 78.3h5.2" stroke="#5e5e5e" stroke-width="1.100" fill="none" opacity="0.620"/><rect x="33.500" y="0" width="5" height="21" fill="url(#fedge)"/><path d="M38.500 0L64 24.500H41.500c-1.700 0-3-1.300-3-3z" fill="rgba(0,0,0,0.110)" transform="translate(0.400 1.800)"/><path d="M38.500 0L64 24.500H41.500c-1.700 0-3-1.300-3-3z" fill="url(#foldg)"/></svg>
<div class="lbl" style="left:628.8px;top:342.3px;width:120px;text-align:center">Missy</div>
<svg class="ic" style="left:792px;top:243px" width="64" height="88" viewBox="0 0 64 88"><path d="M0 1.500C0 .67.670 0 1.500 0H38.500L64 24.500V86.500c0 .83-.67 1.500-1.500 1.500H1.500C.67 88 0 87.330 0 86.500z" fill="url(#docg)"/><g transform="translate(13.500 25.500)"><rect x="0" y="0" width="34" height="37" rx="5" fill="#f6f6f6"/><rect x="1.200" y="1.200" width="31.600" height="34.600" rx="4" fill="url(#pvs)"/><path d="M1.200 18.500h31.600v4.500H1.200z" fill="#1d2f80"/><path d="M1.200 21.500c4-1.200 8 .5 12 1.500 5 1.200 12 .5 19.600.2v8.600c0 2.200-1.800 4-4 4H5.200c-2.200 0-4-1.800-4-4z" fill="#eef3f8"/><path d="M1.200 22c3 .5 6 2 7 3.500l-7 1.500z" fill="#4a5a78"/><path d="M4 31.500c3-1 7-1.200 10 0l-1 1.200H5z" fill="#a87830"/><g transform="translate(-1.800 -2.600) scale(1.120)"><path d="M18.500 22.500l-3.500 12.500c0 1.800 4.500 2.800 10 2.800s10-1 10-2.800L31.500 22.500z" fill="#e9ecef"/><path d="M15.200 34c2 1.600 6 2.400 9.800 2.400s7.800-.8 9.800-2.400l.2 1c0 1.800-4.500 2.800-10 2.800s-10-1-10-2.800z" fill="#7d848c"/><rect x="20" y="25.500" width="10" height="7" fill="#fff"/><path d="M22 31l2-2.500 1.500 1.500 2-3 1.500 4z" fill="#4a5f8a"/><path d="M17.200 18.800c0-1.200 3.400-2 7.800-2s7.800.8 7.800 2v4.200c0 1.200-3.400 2-7.800 2s-7.800-.8-7.800-2z" fill="#17181a"/><ellipse cx="25" cy="18.900" rx="7.300" ry="1.600" fill="#4a4d52"/></g></g><rect x="33.500" y="0" width="5" height="21" fill="url(#fedge)"/><path d="M38.500 0L64 24.500H41.500c-1.700 0-3-1.300-3-3z" fill="rgba(0,0,0,0.110)" transform="translate(0.400 1.800)"/><path d="M38.500 0L64 24.500H41.500c-1.700 0-3-1.300-3-3z" fill="url(#foldg)"/></svg><div class="abs" style="left:792px;top:312.4px;width:63.400px;text-align:center;font-size:12.300px;line-height:14px;color:#6a6a6a;letter-spacing:-0.2px">PNG</div>
<div class="lbl" style="left:764.8px;top:342.3px;width:120px;text-align:center"><i></i>Bandit</div>
<svg class="ic" style="left:254px;top:429px" width="52" height="42" viewBox="0 0 52 42"><rect x="1.400" y="34.600" width="49.200" height="5" rx="1" fill="#e4e4e6"/><rect x="1.400" y="34.600" width="49.200" height="2.400" fill="#f6f6f7"/><rect x="7.900" y="17" width="9.100" height="18" rx="1" fill="url(#br)"/><rect x="18.200" y="7" width="9.300" height="28" rx="1" fill="url(#bo)"/><rect x="28.800" y="2" width="9.200" height="33" rx="1" fill="url(#bg)"/><rect x="39" y="10" width="9" height="25" rx="1" fill="url(#bb)"/></svg>
<div class="lbl" style="left:220.8px;top:502.3px;width:120px;text-align:center">Coco</div>
<svg class="ic" style="left:390px;top:429px" width="52" height="42" viewBox="0 0 52 42"><rect x="1.400" y="34.600" width="49.200" height="5" rx="1" fill="#e4e4e6"/><rect x="1.400" y="34.600" width="49.200" height="2.400" fill="#f6f6f7"/><rect x="7.900" y="17" width="9.100" height="18" rx="1" fill="url(#br)"/><rect x="18.200" y="7" width="9.300" height="28" rx="1" fill="url(#bo)"/><rect x="28.800" y="2" width="9.200" height="33" rx="1" fill="url(#bg)"/><rect x="39" y="10" width="9" height="25" rx="1" fill="url(#bb)"/></svg>
<div class="lbl" style="left:356.8px;top:502.3px;width:120px;text-align:center">Oscar</div>
<svg class="ic" style="left:520px;top:403px" width="64" height="88" viewBox="0 0 64 88"><path d="M0 1.500C0 .67.670 0 1.500 0H38.500L64 24.500V86.500c0 .83-.67 1.500-1.500 1.500H1.500C.67 88 0 87.330 0 86.500z" fill="#f1f1f1"/><path d="M5.8 9.5h3.6M10.5 9.5h3.0M14.6 9.5h6.0M21.7 9.5h5.2M28.0 9.5h5.2M34.3 9.5h3.7M5.8 12.4h6.0M12.9 12.4h6.0M20.0 12.4h2.2M23.3 12.4h4.4M28.8 12.4h6.0M35.9 12.4h2.1M5.8 15.3h4.4M11.3 15.3h4.4M16.8 15.3h4.4M22.3 15.3h4.4M27.8 15.3h2.2M31.1 15.3h4.4M5.8 18.2h2.2M9.1 18.2h3.0M13.2 18.2h2.2M16.5 18.2h3.0M20.6 18.2h4.4M26.1 18.2h3.0M30.2 18.2h2.2M33.5 18.2h3.6M5.8 23.8h5.2M12.1 23.8h2.2M15.4 23.8h2.2M18.7 23.8h2.2M22.0 23.8h5.2M28.3 23.8h3.0M32.4 23.8h5.2M5.8 26.7h3.6M10.5 26.7h5.2M16.8 26.7h2.2M20.1 26.7h2.2M5.8 32.3h3.0M9.9 32.3h5.2M16.2 32.3h4.4M21.7 32.3h3.0M25.8 32.3h6.0M32.9 32.3h3.6M37.6 32.3h3.6M42.3 32.3h5.2M48.6 32.3h3.6M5.8 35.2h4.4M11.3 35.2h2.2M14.6 35.2h2.2M17.9 35.2h4.4M23.4 35.2h4.4M28.9 35.2h4.4M34.4 35.2h4.4M39.9 35.2h3.6M44.6 35.2h2.2M47.9 35.2h3.0M52.0 35.2h2.2M5.8 38.1h6.0M12.9 38.1h3.6M17.6 38.1h6.0M24.7 38.1h3.6M29.4 38.1h4.4M34.9 38.1h6.0M42.0 38.1h3.0M46.1 38.1h5.2M5.8 41.0h2.2M9.1 41.0h3.0M13.2 41.0h5.2M19.5 41.0h3.6M24.2 41.0h3.0M28.3 41.0h6.0M35.4 41.0h5.2M41.7 41.0h2.2M45.0 41.0h5.2M51.3 41.0h3.0M5.8 43.9h6.0M12.9 43.9h3.6M17.6 43.9h5.2M5.8 49.5h3.6M10.5 49.5h3.0M14.6 49.5h3.6M19.3 49.5h3.0M23.4 49.5h5.2M29.7 49.5h5.2M36.0 49.5h5.2M42.3 49.5h3.6M47.0 49.5h6.0M5.8 52.4h3.0M9.9 52.4h5.2M16.2 52.4h3.0M20.3 52.4h3.0M24.4 52.4h4.4M29.9 52.4h6.0M37.0 52.4h3.0M41.1 52.4h3.0M45.2 52.4h5.2M51.5 52.4h2.8M5.8 55.3h6.0M12.9 55.3h2.2M16.2 55.3h2.2M19.5 55.3h3.6M24.2 55.3h4.4M29.7 55.3h3.6M34.4 55.3h3.0M38.5 55.3h6.0M5.8 60.9h5.2M12.1 60.9h3.6M16.8 60.9h4.4M22.3 60.9h6.0M29.4 60.9h3.6M34.1 60.9h3.6M38.8 60.9h2.2M42.1 60.9h3.0M46.2 60.9h2.2M49.5 60.9h3.0M5.8 63.8h4.4M11.3 63.8h3.0M15.4 63.8h3.6M20.1 63.8h3.0M24.2 63.8h4.4M29.7 63.8h5.2M36.0 63.8h5.2M42.3 63.8h2.2M45.6 63.8h4.4M51.1 63.8h3.2M5.8 66.7h3.6M10.5 66.7h6.0M17.6 66.7h2.2M20.9 66.7h6.0M28.0 66.7h2.2M31.3 66.7h4.4M36.8 66.7h6.0M43.9 66.7h3.0M48.0 66.7h4.4M5.8 69.6h3.0M9.9 69.6h4.4M15.4 69.6h6.0M22.5 69.6h3.6M27.2 69.6h2.2M30.5 69.6h6.0M37.6 69.6h4.4M43.1 69.6h4.4M48.6 69.6h4.4M5.8 72.5h6.0M12.9 72.5h2.2M16.2 72.5h6.0M23.3 72.5h3.0M27.4 72.5h3.0M31.5 72.5h3.0M35.6 72.5h2.2M38.9 72.5h3.0M43.0 72.5h5.2M49.3 72.5h4.4M5.8 75.4h6.0M12.9 75.4h3.0M17.0 75.4h5.2M23.3 75.4h5.2M29.6 75.4h4.4M35.1 75.4h6.0M42.2 75.4h3.6M46.9 75.4h3.0M51.0 75.4h3.3M5.8 78.3h2.2M9.1 78.3h2.2M12.4 78.3h6.0M19.5 78.3h6.0M26.6 78.3h2.2M29.9 78.3h5.2" stroke="#5e5e5e" stroke-width="1.100" fill="none" opacity="0.620"/><rect x="33.500" y="0" width="5" height="21" fill="url(#fedge)"/><path d="M38.500 0L64 24.500H41.500c-1.700 0-3-1.300-3-3z" fill="rgba(0,0,0,0.110)" transform="translate(0.400 1.800)"/><path d="M38.500 0L64 24.500H41.500c-1.700 0-3-1.300-3-3z" fill="url(#foldg)"/></svg>
<div class="lbl" style="left:492.8px;top:502.3px;width:120px;text-align:center">Fiona</div>
<svg class="ic" style="left:664px;top:423px" width="48" height="54" viewBox="0 0 48 54"><ellipse cx="24" cy="47.500" rx="11.300" ry="4.200" fill="#9fc0d8"/><ellipse cx="24" cy="46.300" rx="11" ry="3.600" fill="#c5dcec"/><rect x="21.800" y="20" width="4.400" height="26.500" fill="url(#kn2)"/><path d="M4.800 .8h38.400L47 19.500H1z" fill="url(#kn1)"/><path d="M1 19.500h46v2.200H1z" fill="#1f7fd2"/><path d="M10.500 3.500h27l1.800 12.500H8.700z" fill="#f4f8fc"/><circle cx="18" cy="10" r="5.200" fill="#3ecb5e"/><path d="M18 10V4.800a5.200 5.200 0 0 1 5 3.800z" fill="#f2549a"/><path d="M18 10l5-1.400a5.200 5.200 0 0 1-.8 4.600z" fill="#f6a020"/><path d="M18 10V4.800a5.200 5.200 0 0 0-4.800 3.200z" fill="#39a0f0"/><path d="M27 7h7M27 9.500h7M27 12h5" stroke="#d0b8b0" stroke-width="1"/><path d="M13 4.600h12" stroke="#9aa4b0" stroke-width="0.900"/></svg>
<div class="lbl" style="left:628.8px;top:502.3px;width:120px;text-align:center">Daisy</div>
<svg class="ic" style="left:792px;top:403px" width="64" height="88" viewBox="0 0 64 88"><path d="M0 1.500C0 .67.670 0 1.500 0H38.500L64 24.500V86.500c0 .83-.67 1.500-1.500 1.500H1.500C.67 88 0 87.330 0 86.500z" fill="url(#docg)"/><g transform="translate(13.500 25.500)"><rect x="0" y="0" width="34" height="37" rx="5" fill="#f6f6f6"/><rect x="1.200" y="1.200" width="31.600" height="34.600" rx="4" fill="url(#pvs)"/><path d="M1.200 18.500h31.600v4.500H1.200z" fill="#1d2f80"/><path d="M1.200 21.500c4-1.200 8 .5 12 1.500 5 1.200 12 .5 19.600.2v8.600c0 2.200-1.800 4-4 4H5.200c-2.200 0-4-1.800-4-4z" fill="#eef3f8"/><path d="M1.200 22c3 .5 6 2 7 3.500l-7 1.500z" fill="#4a5a78"/><path d="M4 31.500c3-1 7-1.200 10 0l-1 1.200H5z" fill="#a87830"/><g transform="translate(-1.800 -2.600) scale(1.120)"><path d="M18.500 22.500l-3.500 12.500c0 1.800 4.500 2.800 10 2.800s10-1 10-2.800L31.500 22.500z" fill="#e9ecef"/><path d="M15.200 34c2 1.600 6 2.400 9.800 2.400s7.800-.8 9.800-2.400l.2 1c0 1.800-4.500 2.800-10 2.800s-10-1-10-2.800z" fill="#7d848c"/><rect x="20" y="25.500" width="10" height="7" fill="#fff"/><path d="M22 31l2-2.500 1.500 1.500 2-3 1.500 4z" fill="#4a5f8a"/><path d="M17.200 18.800c0-1.200 3.400-2 7.800-2s7.800.8 7.800 2v4.200c0 1.200-3.400 2-7.800 2s-7.800-.8-7.800-2z" fill="#17181a"/><ellipse cx="25" cy="18.900" rx="7.300" ry="1.600" fill="#4a4d52"/></g></g><rect x="33.500" y="0" width="5" height="21" fill="url(#fedge)"/><path d="M38.500 0L64 24.500H41.500c-1.700 0-3-1.300-3-3z" fill="rgba(0,0,0,0.110)" transform="translate(0.400 1.800)"/><path d="M38.500 0L64 24.500H41.500c-1.700 0-3-1.300-3-3z" fill="url(#foldg)"/></svg><div class="abs" style="left:792px;top:472.4px;width:63.400px;text-align:center;font-size:12.300px;line-height:14px;color:#6a6a6a;letter-spacing:-0.2px">PNG</div>
<div class="lbl" style="left:764.8px;top:502.3px;width:120px;text-align:center"><i></i>Shadow</div>
<svg class="ic" style="left:254px;top:573px" width="52" height="60" viewBox="0 0 52 60"><rect x="19" y="23" width="8.500" height="30" rx="1.500" fill="#fbbd3c"/><rect x="28.800" y="9.600" width="9.200" height="44" rx="1.800" fill="#3fd06a"/><rect x="39" y="17" width="9" height="36" rx="1.800" fill="#3faef5"/></svg>
<svg class="ic" style="left:384px;top:563px" width="64" height="88" viewBox="0 0 64 88"><path d="M0 1.500C0 .67.670 0 1.500 0H38.500L64 24.500V86.500c0 .83-.67 1.500-1.500 1.500H1.500C.67 88 0 87.330 0 86.500z" fill="#f1f1f1"/><path d="M5.8 9.5h6.0M12.9 9.5h3.0M17.0 9.5h4.4M22.5 9.5h3.0M26.6 9.5h3.0M30.7 9.5h2.2M34.0 9.5h3.6M5.8 12.4h3.0M9.9 12.4h3.6M14.6 12.4h5.2M20.9 12.4h3.0M25.0 12.4h5.2M31.3 12.4h3.6M5.8 15.3h3.6M10.5 15.3h5.2M16.8 15.3h4.4M22.3 15.3h3.0M26.4 15.3h2.2M29.7 15.3h6.0M5.8 18.2h4.4M11.3 18.2h6.0M18.4 18.2h5.2M24.7 18.2h5.2M31.0 18.2h4.4M5.8 23.8h5.2M12.1 23.8h3.0M16.2 23.8h5.2M22.5 23.8h3.0M26.6 23.8h5.2M32.9 23.8h5.1M5.8 26.7h4.4M11.3 26.7h3.0M15.4 26.7h5.2M5.8 32.3h2.2M9.1 32.3h3.0M13.2 32.3h3.0M17.3 32.3h3.0M21.4 32.3h4.4M26.9 32.3h5.2M33.2 32.3h6.0M40.3 32.3h2.2M43.6 32.3h5.2M49.9 32.3h2.2M5.8 35.2h3.6M10.5 35.2h6.0M17.6 35.2h5.2M23.9 35.2h5.2M30.2 35.2h5.2M36.5 35.2h4.4M42.0 35.2h2.2M45.3 35.2h5.2M51.6 35.2h2.2M5.8 38.1h3.0M9.9 38.1h3.0M14.0 38.1h3.6M18.7 38.1h2.2M22.0 38.1h2.2M25.3 38.1h5.2M31.6 38.1h4.4M37.1 38.1h5.2M43.4 38.1h2.2M46.7 38.1h2.2M50.0 38.1h4.3M5.8 41.0h3.6M10.5 41.0h5.2M16.8 41.0h5.2M23.1 41.0h5.2M29.4 41.0h5.2M35.7 41.0h3.0M39.8 41.0h6.0M46.9 41.0h3.6M51.6 41.0h2.7M5.8 43.9h5.2M12.1 43.9h3.0M16.2 43.9h6.0M23.3 43.9h5.2M29.6 43.9h3.6M34.3 43.9h5.2M40.6 43.9h3.0M44.7 43.9h4.4M5.8 49.5h3.0M9.9 49.5h4.4M15.4 49.5h2.2M18.7 49.5h4.4M24.2 49.5h4.4M29.7 49.5h3.6M34.4 49.5h2.2M37.7 49.5h6.0M44.8 49.5h3.0M48.9 49.5h4.4M5.8 52.4h2.2M9.1 52.4h3.0M13.2 52.4h6.0M20.3 52.4h3.6M25.0 52.4h2.2M28.3 52.4h3.0M32.4 52.4h6.0M39.5 52.4h6.0M46.6 52.4h6.0M5.8 55.3h3.0M9.9 55.3h3.6M14.6 55.3h3.0M18.7 55.3h4.4M24.2 55.3h3.0M28.3 55.3h6.0M35.4 55.3h2.2M38.7 55.3h4.4M5.8 60.9h4.4M11.3 60.9h3.0M15.4 60.9h6.0M22.5 60.9h3.0M26.6 60.9h3.0M30.7 60.9h6.0M37.8 60.9h4.4M43.3 60.9h5.2M49.6 60.9h4.4M5.8 63.8h3.6M10.5 63.8h4.4M16.0 63.8h3.0M20.1 63.8h3.6M24.8 63.8h3.6M29.5 63.8h2.2M32.8 63.8h6.0M39.9 63.8h3.6M44.6 63.8h2.2M47.9 63.8h3.6M5.8 66.7h5.2M12.1 66.7h4.4M17.6 66.7h4.4M23.1 66.7h6.0M30.2 66.7h2.2M33.5 66.7h4.4M39.0 66.7h3.6M43.7 66.7h5.2M50.0 66.7h4.3M5.8 69.6h3.6M10.5 69.6h5.2M16.8 69.6h2.2M20.1 69.6h2.2M23.4 69.6h3.0M27.5 69.6h2.2M30.8 69.6h2.2M34.1 69.6h3.6M38.8 69.6h3.6M43.5 69.6h2.2M46.8 69.6h3.0M50.9 69.6h3.4M5.8 72.5h3.0M9.9 72.5h4.4M15.4 72.5h6.0M22.5 72.5h3.6M27.2 72.5h4.4M32.7 72.5h3.0M36.8 72.5h5.2M43.1 72.5h5.2M49.4 72.5h4.9M5.8 75.4h4.4M11.3 75.4h6.0M18.4 75.4h3.6M23.1 75.4h2.2M26.4 75.4h3.6M31.1 75.4h2.2M34.4 75.4h6.0M41.5 75.4h3.0M45.6 75.4h4.4M51.1 75.4h2.2M5.8 78.3h2.2M9.1 78.3h6.0M16.2 78.3h2.2M19.5 78.3h3.6M24.2 78.3h2.2M27.5 78.3h5.2M33.8 78.3h3.0M37.9 78.3h2.2M41.2 78.3h3.6" stroke="#5e5e5e" stroke-width="1.100" fill="none" opacity="0.620"/><rect x="33.500" y="0" width="5" height="21" fill="url(#fedge)"/><path d="M38.500 0L64 24.500H41.500c-1.700 0-3-1.300-3-3z" fill="rgba(0,0,0,0.110)" transform="translate(0.400 1.800)"/><path d="M38.500 0L64 24.500H41.500c-1.700 0-3-1.300-3-3z" fill="url(#foldg)"/></svg>
<svg class="ic" style="left:520px;top:563px" width="64" height="88" viewBox="0 0 64 88"><path d="M0 1.500C0 .67.670 0 1.500 0H38.500L64 24.500V86.500c0 .83-.67 1.500-1.500 1.500H1.500C.67 88 0 87.330 0 86.500z" fill="url(#docg)"/><rect x="13" y="29" width="38" height="40" rx="6" fill="#86aee8"/><rect x="33.500" y="0" width="5" height="21" fill="url(#fedge)"/><path d="M38.500 0L64 24.500H41.500c-1.700 0-3-1.300-3-3z" fill="rgba(0,0,0,0.110)" transform="translate(0.400 1.800)"/><path d="M38.500 0L64 24.500H41.500c-1.700 0-3-1.300-3-3z" fill="url(#foldg)"/></svg>
</div>
<div class="win" id="w1" style="left:325px;top:120px">
<div class="sb" style="width:202.5px;background:linear-gradient(180deg,#f7cccc 0%,#f8cacb 45%,#f7c1c8 65%,#f5b4c4 85%,#f5b0c3 100%)">
<div class="tl" style="left:19.3px;background:#fe5f57;box-shadow:0 0 0 0.5px rgba(0,0,0,0.12) inset"></div>
<div class="tl" style="left:39.3px;background:#febc2e;box-shadow:0 0 0 0.5px rgba(0,0,0,0.12) inset"></div>
<div class="tl" style="left:59.3px;background:#28c840;box-shadow:0 0 0 0.5px rgba(0,0,0,0.12) inset"></div>
<div class="hd" style="top:56px;line-height:15px">Favorites</div>
<div class="it sel" style="top:72px"><svg style="left:9.5px;top:8px" width="15" height="12" viewBox="0 0 15 12" fill="none" stroke="#1d6cf2" stroke-width="1.250" stroke-linejoin="round"><path d="M.65 2.100c0-.8.650-1.450 1.450-1.450h2.700c.5 0 .9.200 1.200.55l.7.850h6.200c.8 0 1.450.65 1.450 1.450v6.400c0 .8-.65 1.450-1.450 1.450H2.100c-.8 0-1.450-.65-1.450-1.450z"/><path d="M.65 4.700h13.700"/></svg><span class="t">Is Graphics</span><div class="badge">123</div></div>
<div class="it" style="top:100px"><svg style="left:11.3px;top:7.5px" width="11.500" height="13.500" viewBox="0 0 11.500 13.500" fill="none" stroke="#1d6cf2" stroke-width="1.250" stroke-linejoin="round"><path d="M.65 2.100c0-.8.650-1.450 1.450-1.450h4.200l4.550 4.550v6.200c0 .8-.65 1.450-1.450 1.450H2.100c-.8 0-1.450-.65-1.450-1.450z"/><path d="M6.100.85v3.100c0 .7.500 1.200 1.200 1.200h3.300"/></svg><span class="t">AirDrop</span></div>
<div class="it" style="top:128px"><svg style="left:10.5px;top:7.3px" width="13.500" height="13.500" viewBox="0 0 13.500 13.500" fill="none" stroke="#1d6cf2" stroke-width="1.250" stroke-linecap="round" stroke-linejoin="round"><circle cx="6.750" cy="6.750" r="6"/><path d="M6.750 3.200v3.800H3.900"/></svg><span class="t" style="letter-spacing:0.0px">Recents</span></div>
<div class="it" style="top:156px"><svg style="left:11.3px;top:7.5px" width="11.500" height="13.500" viewBox="0 0 11.500 13.500" fill="none" stroke="#1d6cf2" stroke-width="1.250" stroke-linejoin="round"><path d="M.65 2.100c0-.8.650-1.450 1.450-1.450h4.200l4.550 4.550v6.200c0 .8-.65 1.450-1.450 1.450H2.100c-.8 0-1.450-.65-1.450-1.450z"/><path d="M6.100.85v3.100c0 .7.500 1.200 1.200 1.200h3.300"/></svg><span class="t" style="letter-spacing:0.2px">Applications</span></div>
<div class="it" style="top:184px"><svg style="left:10px;top:6.3px" width="14" height="15.500" viewBox="0 0 14 15.500" fill="none" stroke="#1d6cf2" stroke-width="1.250" stroke-linejoin="round"><path d="M3.600 3.300V2.100c0-.8.650-1.450 1.450-1.450h3.500l4.800 4.800v5.500c0 .8-.65 1.450-1.450 1.450H10"/><path d="M8.300.85v3.200c0 .7.500 1.200 1.200 1.200h3.600"/><path d="M.65 5.200c0-.8.650-1.450 1.450-1.450h3.300L9.900 8.200v5.200c0 .8-.65 1.450-1.450 1.450H2.100c-.8 0-1.450-.65-1.450-1.450z"/><path d="M5.200 4v3c0 .7.500 1.200 1.200 1.200h3.300"/></svg><span class="t" style="letter-spacing:0.14px">Documents</span></div>
<div class="it" style="top:212px"><svg style="left:9.5px;top:8px" width="15" height="12" viewBox="0 0 15 12" fill="none" stroke="#1d6cf2" stroke-width="1.250" stroke-linejoin="round"><path d="M.65 2.100c0-.8.650-1.450 1.450-1.450h2.700c.5 0 .9.200 1.200.55l.7.850h6.200c.8 0 1.450.65 1.450 1.450v6.400c0 .8-.65 1.450-1.450 1.450H2.100c-.8 0-1.450-.65-1.450-1.450z"/><path d="M.65 4.700h13.700"/></svg><span class="t">Folder</span></div>
<div class="it" style="top:240px"><svg style="left:10.5px;top:7.3px" width="13.500" height="13.500" viewBox="0 0 13.500 13.500" fill="none" stroke="#1d6cf2" stroke-width="1.250" stroke-linecap="round" stroke-linejoin="round"><circle cx="6.750" cy="6.750" r="6"/><path d="M6.750 3.500v6.200M4.200 7.300l2.550 2.550L9.300 7.300"/></svg><span class="t">Downloads</span></div>
<div class="hd" style="top:286px;line-height:15px">iCloud</div>
<div class="it" style="top:302px"><svg style="left:9.3px;top:8.5px" width="15.500" height="11.500" viewBox="0 0 15.500 11.500" fill="none" stroke="#1d6cf2" stroke-width="1.250" stroke-linejoin="round"><path d="M.65 6.400L2.600 1.600c.25-.6.750-.95 1.400-.95h7.500c.65 0 1.150.35 1.400.95l1.950 4.800v3c0 .8-.65 1.450-1.450 1.450H2.100c-.8 0-1.450-.65-1.450-1.450z"/><path d="M.8 6.300h3.400c.5 0 .8.300.9.700.3 1.100 1.300 1.800 2.650 1.800s2.350-.7 2.650-1.800c.1-.4.400-.7.900-.7h3.400"/></svg><span class="t">iCloud Drive</span></div>
<div class="hd" style="top:348px;line-height:15px">Tags</div>
<div class="it" style="top:364px"><div class="dot" style="background:#f08c14"></div><span class="t" style="letter-spacing:-0.06px">Orange Tag</span></div>
<div class="it" style="top:392px"><div class="dot" style="background:#1a6cf6"></div><span class="t">Blue Tag</span></div>
<div class="it" style="top:420px"><div class="dot" style="background:#17a81c"></div><span class="t" style="letter-spacing:-0.14px">Green Label</span></div>
<div class="it" style="top:448px"><svg style="left:10.7px;top:7.7px" width="13" height="13" viewBox="0 0 13 13" fill="none" stroke="#a87280" stroke-width="1.100"><circle cx="3.100" cy="3.100" r="2.300"/><circle cx="9.900" cy="3.100" r="2.300"/><circle cx="3.100" cy="9.900" r="2.300"/><circle cx="9.900" cy="9.900" r="2.300"/></svg><span class="t">All Tags</span></div>
</div>
<div class="tb" style="left:202.5px;width:696.5px">
<svg style="left:25.69999999999999px;top:18.700px" width="8.500" height="14.200" viewBox="0 0 8.500 14.200" fill="none" stroke="#5c5c5c" stroke-width="1.700" stroke-linecap="round" stroke-linejoin="round"><path d="M7.500 1L1.200 7.100l6.300 6.100"/></svg>
<svg style="left:57.0px;top:18.700px" width="8.500" height="14.200" viewBox="0 0 8.500 14.200" fill="none" stroke="#b6b6b6" stroke-width="1.700" stroke-linecap="round" stroke-linejoin="round"><path d="M1 1l6.300 6.100L1 13.200"/></svg>
<div class="title" style="left:85.69999999999999px">Is Graphics</div>
<div class="gbtn" style="left:309.5px"></div>
<svg style="left:318.5px;top:19.600px" width="14.400" height="14.600" viewBox="0 0 14.400 14.600" fill="none" stroke="#5c5c5c" stroke-width="1.250"><rect x=".65" y=".65" width="5.100" height="5.200" rx="1.200"/><rect x="8.650" y=".65" width="5.100" height="5.200" rx="1.200"/><rect x=".65" y="8.750" width="5.100" height="5.200" rx="1.200"/><rect x="8.650" y="8.750" width="5.100" height="5.200" rx="1.200"/></svg>
<svg style="left:354.1px;top:20.600px" width="16" height="13" viewBox="0 0 16 13" stroke="#5c5c5c" stroke-width="1.500" stroke-linecap="round"><path d="M5.300 1.200h10M5.300 6.400h10M5.300 11.600h10"/><circle cx="1.100" cy="1.200" r="1" fill="#5c5c5c" stroke="none"/><circle cx="1.100" cy="6.400" r="1" fill="#5c5c5c" stroke="none"/><circle cx="1.100" cy="11.600" r="1" fill="#5c5c5c" stroke="none"/></svg>
<div class="sep" style="left:380.79999999999995px"></div>
<svg style="left:392.4px;top:19.700px" width="17.800" height="14.600" viewBox="0 0 17.800 14.600" fill="none" stroke="#5c5c5c" stroke-width="1.300"><rect x=".65" y=".65" width="16.500" height="13.300" rx="2.200"/><path d="M6.100.65v13.300M11.700.65v13.300"/></svg>
<div class="sep" style="left:420.79999999999995px"></div>
<svg style="left:432.4px;top:19.900px" width="17.800" height="14.400" viewBox="0 0 17.800 14.400" fill="none" stroke="#5c5c5c" stroke-width="1.300"><rect x=".65" y=".65" width="16.500" height="9.200" rx="2.200"/><g fill="#5c5c5c" stroke="none"><rect x=".3" y="12" width="2.200" height="2.200" rx=".5"/><rect x="4.050" y="12" width="2.200" height="2.200" rx=".5"/><rect x="7.800" y="12" width="2.200" height="2.200" rx=".5"/><rect x="11.550" y="12" width="2.200" height="2.200" rx=".5"/><rect x="15.300" y="12" width="2.200" height="2.200" rx=".5"/></g></svg>
<svg style="left:512.1px;top:17.500px" width="13.600" height="17.600" viewBox="0 0 13.600 17.600" fill="none" stroke="#b4b4b4" stroke-width="1.250" stroke-linecap="round" stroke-linejoin="round"><path d="M4.200 5.900H2.400c-1 0-1.750.75-1.750 1.750v7.500c0 1 .75 1.750 1.750 1.750h8.800c1 0 1.750-.75 1.750-1.750v-7.500c0-1-.75-1.750-1.750-1.750H9.400"/><path d="M6.800 11.200V.9M4.300 3.300L6.800.8l2.500 2.500"/></svg>
<svg style="left:545.5px;top:18.500px" width="18.500" height="18.500" viewBox="0 0 18.500 18.500" fill="none" stroke="#b4b4b4" stroke-width="1.250" stroke-linejoin="round"><path d="M1 3.200C1 2 2 1 3.200 1h4.500c.7 0 1.300.25 1.800.75l7.300 7.300c.9.900.9 2.200 0 3.100l-4.650 4.650c-.9.900-2.200.9-3.100 0l-7.300-7.300C1.250 9 1 8.400 1 7.700z"/><circle cx="5" cy="5" r="1" fill="#b4b4b4" stroke="none"/></svg>
<svg style="left:623.1px;top:20px" width="15" height="13.600" viewBox="0 0 15 13.600" fill="none" stroke="#5c5c5c" stroke-width="1.700" stroke-linecap="round" stroke-linejoin="round"><path d="M1 1l6 5.800-6 5.800M8 1l6 5.800-6 5.800"/></svg>
<svg style="left:659.5px;top:19.200px" width="15" height="15.200" viewBox="0 0 15 15.200" fill="none" stroke="#5c5c5c" stroke-width="1.750" stroke-linecap="round"><circle cx="6" cy="6" r="4.900"/><path d="M9.700 9.900l4.200 4.200"/></svg>
</div>
<div class="abs" style="left:404px;top:53px;width:1px;height:519px;background:#e6e6e6"></div>
<div class="abs" style="left:610px;top:53px;width:1px;height:519px;background:#e6e6e6"></div>
<div class="row" style="left:210px;top:62.7px;width:185px;"><svg style="left:9.8px;top:4.9px" width="15" height="12.3" viewBox="0 0 15 12.3"><path d="M0 1.700C0 .76.760 0 1.700 0h3.100c.55 0 1 .2 1.350.6l.75.850h6.400c.94 0 1.700.76 1.700 1.700v7.450c0 .94-.76 1.700-1.700 1.700H1.700c-.94 0-1.700-.76-1.700-1.700z" fill="#4fa9ec"/><path d="M0 3.700c0-.72.580-1.300 1.300-1.300h12.400c.72 0 1.300.58 1.300 1.300v6.900c0 .94-.76 1.700-1.700 1.700H1.700c-.94 0-1.700-.76-1.700-1.700z" fill="#74c6f7"/></svg><span class="t" style="left:30px">North Albinside</span><svg style="left:167.2px;top:6px" width="5.6" height="10" viewBox="0 0 5.6 10" fill="none" stroke="#5a5a5a" stroke-width="1.4" stroke-linecap="round" stroke-linejoin="round"><path d="M0.800 0.800L4.8 5.0L0.800 9.2"/></svg></div>
<div class="row" style="left:210px;top:84.7px;width:185px;background:#efefef;border-radius:5px;"><svg style="left:9.8px;top:4.9px" width="15" height="12.3" viewBox="0 0 15 12.3"><path d="M0 1.700C0 .76.760 0 1.700 0h3.100c.55 0 1 .2 1.350.6l.75.850h6.400c.94 0 1.700.76 1.700 1.700v7.450c0 .94-.76 1.700-1.700 1.700H1.700c-.94 0-1.700-.76-1.700-1.700z" fill="#4fa9ec"/><path d="M0 3.700c0-.72.580-1.300 1.300-1.300h12.400c.72 0 1.300.58 1.300 1.300v6.900c0 .94-.76 1.700-1.700 1.700H1.700c-.94 0-1.700-.76-1.700-1.700z" fill="#74c6f7"/></svg><span class="t" style="left:30px">Drakemouth</span><div class="abs" style="left:155.500px;top:6.700px;width:8.600px;height:8.600px;border-radius:50%;background:#b436d8"></div><svg style="left:167.2px;top:6px" width="5.6" height="10" viewBox="0 0 5.6 10" fill="none" stroke="#5a5a5a" stroke-width="1.4" stroke-linecap="round" stroke-linejoin="round"><path d="M0.800 0.800L4.8 5.0L0.800 9.2"/></svg></div>
<div class="row" style="left:210px;top:106.7px;width:185px;"><svg style="left:11.6px;top:4px" width="11" height="14" viewBox="0 0 11 14"><path d="M0 .8C0 .36.360 0 .8 0h5.900L11 4.300v8.900c0 .44-.36.800-.8.800H.8c-.44 0-.8-.36-.8-.8z" fill="#fafafa"/><rect x="2.600" y="4.200" width="6" height="4.800" rx="0.700" fill="#1f4f9c"/><rect x="3.200" y="4.800" width="4.800" height="3.300" fill="#3d8be0"/><rect x="4.300" y="9.400" width="2.600" height="0.900" fill="#9aa4b0"/><rect x="3.300" y="10.300" width="4.600" height="0.800" rx="0.400" fill="#c4c9d0"/><path d="M6.700 0L11 4.300H7.500c-.44 0-.8-.36-.8-.8z" fill="#e4e4e4"/></svg><span class="t" style="left:30px">Charlie</span></div>
<div class="row" style="left:210px;top:128.7px;width:185px;"><svg style="left:9.8px;top:4.9px" width="15" height="12.3" viewBox="0 0 15 12.3"><path d="M0 1.700C0 .76.760 0 1.700 0h3.100c.55 0 1 .2 1.350.6l.75.850h6.400c.94 0 1.700.76 1.700 1.700v7.450c0 .94-.76 1.700-1.700 1.700H1.700c-.94 0-1.700-.76-1.700-1.700z" fill="#4fa9ec"/><path d="M0 3.700c0-.72.580-1.300 1.300-1.300h12.400c.72 0 1.300.58 1.300 1.300v6.900c0 .94-.76 1.700-1.700 1.700H1.700c-.94 0-1.700-.76-1.700-1.700z" fill="#74c6f7"/></svg><span class="t" style="left:30px">Bartellmouth</span><svg style="left:167.2px;top:6px" width="5.6" height="10" viewBox="0 0 5.6 10" fill="none" stroke="#5a5a5a" stroke-width="1.4" stroke-linecap="round" stroke-linejoin="round"><path d="M0.800 0.800L4.8 5.0L0.800 9.2"/></svg></div>
<div class="row" style="left:210px;top:150.7px;width:185px;"><svg style="left:11.6px;top:4px" width="11" height="14" viewBox="0 0 11 14"><path d="M0 .8C0 .36.360 0 .8 0h5.900L11 4.300v8.900c0 .44-.36.800-.8.800H.8c-.44 0-.8-.36-.8-.8z" fill="#f3f3f3"/><path d="M6.700 0L11 4.300H7.500c-.44 0-.8-.36-.8-.8z" fill="#e2e2e2"/></svg><span class="t" style="left:30px">Simba</span></div>
<div class="row" style="left:210px;top:172.7px;width:185px;"><svg style="left:9.8px;top:4.9px" width="15" height="12.3" viewBox="0 0 15 12.3"><path d="M0 1.700C0 .76.760 0 1.700 0h3.100c.55 0 1 .2 1.350.6l.75.850h6.400c.94 0 1.700.76 1.700 1.700v7.450c0 .94-.76 1.700-1.700 1.700H1.700c-.94 0-1.700-.76-1.700-1.700z" fill="#4fa9ec"/><path d="M0 3.700c0-.72.580-1.300 1.300-1.300h12.400c.72 0 1.300.58 1.300 1.300v6.900c0 .94-.76 1.700-1.700 1.700H1.700c-.94 0-1.700-.76-1.700-1.700z" fill="#74c6f7"/></svg><span class="t" style="left:30px">Lake Johanborough</span><svg style="left:167.2px;top:6px" width="5.6" height="10" viewBox="0 0 5.6 10" fill="none" stroke="#5a5a5a" stroke-width="1.4" stroke-linecap="round" stroke-linejoin="round"><path d="M0.800 0.800L4.8 5.0L0.800 9.2"/></svg></div>
<div class="row" style="left:210px;top:194.7px;width:185px;"><svg style="left:11.6px;top:4px" width="11" height="14" viewBox="0 0 11 14"><path d="M0 .8C0 .36.360 0 .8 0h5.900L11 4.300v8.900c0 .44-.36.800-.8.800H.8c-.44 0-.8-.36-.8-.8z" fill="#f3f3f3"/><path d="M6.700 0L11 4.300H7.500c-.44 0-.8-.36-.8-.8z" fill="#e2e2e2"/></svg><span class="t" style="left:30px">Boo</span></div>
<div class="row" style="left:210px;top:216.7px;width:185px;"><svg style="left:11.6px;top:4px" width="11" height="14" viewBox="0 0 11 14"><path d="M0 .8C0 .36.360 0 .8 0h5.900L11 4.300v8.900c0 .44-.36.800-.8.800H.8c-.44 0-.8-.36-.8-.8z" fill="#fafafa"/><rect x="2.600" y="4.200" width="6" height="4.800" rx="0.700" fill="#1f4f9c"/><rect x="3.200" y="4.800" width="4.800" height="3.300" fill="#3d8be0"/><rect x="4.300" y="9.400" width="2.600" height="0.900" fill="#9aa4b0"/><rect x="3.300" y="10.300" width="4.600" height="0.800" rx="0.400" fill="#c4c9d0"/><path d="M6.700 0L11 4.300H7.500c-.44 0-.8-.36-.8-.8z" fill="#e4e4e4"/></svg><span class="t" style="left:30px">Max</span></div>
<div class="row" style="left:210px;top:238.7px;width:185px;"><svg style="left:9.8px;top:4.9px" width="15" height="12.3" viewBox="0 0 15 12.3"><path d="M0 1.700C0 .76.760 0 1.700 0h3.100c.55 0 1 .2 1.350.6l.75.850h6.400c.94 0 1.700.76 1.700 1.700v7.450c0 .94-.76 1.700-1.700 1.700H1.700c-.94 0-1.700-.76-1.700-1.700z" fill="#4fa9ec"/><path d="M0 3.700c0-.72.580-1.300 1.300-1.300h12.400c.72 0 1.300.58 1.300 1.300v6.900c0 .94-.76 1.700-1.700 1.700H1.700c-.94 0-1.700-.76-1.700-1.700z" fill="#74c6f7"/></svg><span class="t" style="left:30px">Fayside</span><svg style="left:167.2px;top:6px" width="5.6" height="10" viewBox="0 0 5.6 10" fill="none" stroke="#5a5a5a" stroke-width="1.4" stroke-linecap="round" stroke-linejoin="round"><path d="M0.800 0.800L4.8 5.0L0.800 9.2"/></svg></div>
<div class="row" style="left:210px;top:260.7px;width:185px;"><svg style="left:9.8px;top:4.9px" width="15" height="12.3" viewBox="0 0 15 12.3"><path d="M0 1.700C0 .76.760 0 1.700 0h3.100c.55 0 1 .2 1.350.6l.75.850h6.400c.94 0 1.700.76 1.700 1.700v7.450c0 .94-.76 1.700-1.700 1.700H1.700c-.94 0-1.700-.76-1.700-1.700z" fill="#4fa9ec"/><path d="M0 3.700c0-.72.580-1.300 1.300-1.300h12.400c.72 0 1.300.58 1.300 1.300v6.900c0 .94-.76 1.700-1.700 1.700H1.700c-.94 0-1.700-.76-1.700-1.700z" fill="#74c6f7"/></svg><span class="t" style="left:30px">Nienowmouth</span><svg style="left:167.2px;top:6px" width="5.6" height="10" viewBox="0 0 5.6 10" fill="none" stroke="#5a5a5a" stroke-width="1.4" stroke-linecap="round" stroke-linejoin="round"><path d="M0.800 0.800L4.8 5.0L0.800 9.2"/></svg></div>
<div class="row" style="left:210px;top:282.7px;width:185px;"><svg style="left:11.6px;top:4px" width="11" height="14" viewBox="0 0 11 14"><path d="M0 .8C0 .36.360 0 .8 0h5.900L11 4.300v8.900c0 .44-.36.800-.8.800H.8c-.44 0-.8-.36-.8-.8z" fill="#fafafa"/><rect x="2.600" y="4.200" width="6" height="4.800" rx="0.700" fill="#1f4f9c"/><rect x="3.200" y="4.800" width="4.800" height="3.300" fill="#3d8be0"/><rect x="4.300" y="9.400" width="2.600" height="0.900" fill="#9aa4b0"/><rect x="3.300" y="10.300" width="4.600" height="0.800" rx="0.400" fill="#c4c9d0"/><path d="M6.700 0L11 4.300H7.500c-.44 0-.8-.36-.8-.8z" fill="#e4e4e4"/></svg><span class="t" style="left:30px">Milo</span></div>
<div class="row" style="left:210px;top:304.7px;width:185px;"><svg style="left:11.6px;top:4px" width="11" height="14" viewBox="0 0 11 14"><path d="M0 .8C0 .36.360 0 .8 0h5.900L11 4.300v8.900c0 .44-.36.800-.8.800H.8c-.44 0-.8-.36-.8-.8z" fill="#e2e2e2"/><path d="M2.200 3.5h3.5" stroke="#9a9a9a" stroke-width="0.7"/><path d="M2.200 5.3h4.2" stroke="#9a9a9a" stroke-width="0.7"/><path d="M2.200 7.1h6.4" stroke="#9a9a9a" stroke-width="0.7"/><path d="M2.200 8.9h6.4" stroke="#9a9a9a" stroke-width="0.7"/><path d="M2.200 10.7h6.4" stroke="#9a9a9a" stroke-width="0.7"/><path d="M2.200 12.3h5" stroke="#9a9a9a" stroke-width="0.7"/><path d="M6.700 0L11 4.300H7.500c-.44 0-.8-.36-.8-.8z" fill="#c8c8c8"/></svg><span class="t" style="left:30px">Lily</span></div>
<div class="row" style="left:210px;top:326.7px;width:185px;"><svg style="left:11.6px;top:4px" width="11" height="14" viewBox="0 0 11 14"><path d="M0 .8C0 .36.360 0 .8 0h5.900L11 4.300v8.900c0 .44-.36.800-.8.800H.8c-.44 0-.8-.36-.8-.8z" fill="#fbfbfb"/><rect x="2.200" y="8" width="1.800" height="2.600" fill="#f04a3c"/><rect x="4.100" y="6.600" width="1.800" height="4" fill="#f59a23"/><rect x="6" y="5" width="1.800" height="5.600" fill="#34c759"/><rect x="7.900" y="6.800" width="1.500" height="3.800" fill="#2f9bf0"/><path d="M6.700 0L11 4.300H7.500c-.44 0-.8-.36-.8-.8z" fill="#e8e8e8"/></svg><span class="t" style="left:30px">Dakota</span></div>
<div class="row" style="left:210px;top:348.7px;width:185px;"><svg style="left:11.6px;top:4px" width="11" height="14" viewBox="0 0 11 14"><path d="M0 .8C0 .36.360 0 .8 0h5.900L11 4.300v8.900c0 .44-.36.800-.8.800H.8c-.44 0-.8-.36-.8-.8z" fill="#e2e2e2"/><path d="M2.200 3.5h3.5" stroke="#9a9a9a" stroke-width="0.7"/><path d="M2.200 5.3h4.2" stroke="#9a9a9a" stroke-width="0.7"/><path d="M2.200 7.1h6.4" stroke="#9a9a9a" stroke-width="0.7"/><path d="M2.200 8.9h6.4" stroke="#9a9a9a" stroke-width="0.7"/><path d="M2.200 10.7h6.4" stroke="#9a9a9a" stroke-width="0.7"/><path d="M2.200 12.3h5" stroke="#9a9a9a" stroke-width="0.7"/><path d="M6.700 0L11 4.300H7.500c-.44 0-.8-.36-.8-.8z" fill="#c8c8c8"/></svg><span class="t" style="left:30px">Toby</span></div>
<div class="row" style="left:415px;top:62.7px;width:185px;background:#0a5fe0;border-radius:5px;color:#fff;"><svg style="left:12px;top:4px" width="11" height="14" viewBox="0 0 11 14"><path d="M0 .8C0 .36.360 0 .8 0h5.900L11 4.300v8.900c0 .44-.36.800-.8.800H.8c-.44 0-.8-.36-.8-.8z" fill="#ffffff"/><path d="M6.700 0L11 4.300H7.500c-.44 0-.8-.36-.8-.8z" fill="#cfe0fb"/></svg><span class="t" style="left:30.200px;-webkit-text-stroke:0.2px #fff">Lucy</span></div>
<div class="row" style="left:415px;top:84.7px;width:185px;"><svg style="left:12px;top:4px" width="11" height="14" viewBox="0 0 11 14"><path d="M0 .8C0 .36.360 0 .8 0h5.900L11 4.300v8.900c0 .44-.36.800-.8.800H.8c-.44 0-.8-.36-.8-.8z" fill="#f3f3f3"/><path d="M6.700 0L11 4.300H7.500c-.44 0-.8-.36-.8-.8z" fill="#e2e2e2"/></svg><span class="t" style="left:30.200px">Lily</span></div>
<div class="row" style="left:415px;top:106.7px;width:185px;"><svg style="left:12px;top:4px" width="11" height="14" viewBox="0 0 11 14"><path d="M0 .8C0 .36.360 0 .8 0h5.900L11 4.300v8.900c0 .44-.36.800-.8.800H.8c-.44 0-.8-.36-.8-.8z" fill="#f3f3f3"/><path d="M6.700 0L11 4.300H7.500c-.44 0-.8-.36-.8-.8z" fill="#e2e2e2"/></svg><span class="t" style="left:30.200px">Roxie</span></div>
<div class="row" style="left:415px;top:128.7px;width:185px;"><svg style="left:12px;top:4px" width="11" height="14" viewBox="0 0 11 14"><path d="M0 .8C0 .36.360 0 .8 0h5.900L11 4.300v8.900c0 .44-.36.800-.8.800H.8c-.44 0-.8-.36-.8-.8z" fill="#f3f3f3"/><path d="M6.700 0L11 4.300H7.500c-.44 0-.8-.36-.8-.8z" fill="#e2e2e2"/></svg><span class="t" style="left:30.200px">Oscar</span></div>
<div class="row" style="left:415px;top:150.7px;width:185px;"><svg style="left:12px;top:4px" width="11" height="14" viewBox="0 0 11 14"><path d="M0 .8C0 .36.360 0 .8 0h5.900L11 4.300v8.900c0 .44-.36.800-.8.800H.8c-.44 0-.8-.36-.8-.8z" fill="#f3f3f3"/><path d="M6.700 0L11 4.300H7.500c-.44 0-.8-.36-.8-.8z" fill="#e2e2e2"/></svg><span class="t" style="left:30.200px">Tiger</span><div class="abs" style="left:164px;top:6.700px;width:8.600px;height:8.600px;border-radius:50%;background:#f5a60a"></div></div>
<div class="row" style="left:415px;top:172.7px;width:185px;"><svg style="left:12px;top:4px" width="11" height="14" viewBox="0 0 11 14"><path d="M0 .8C0 .36.360 0 .8 0h5.900L11 4.300v8.900c0 .44-.36.800-.8.800H.8c-.44 0-.8-.36-.8-.8z" fill="#fbfbfb"/><path d="M2.400 3.800h6.400l.9 3.400H1.500z" fill="#2f96ea"/><rect x="3.300" y="4.300" width="4.600" height="2.200" fill="#dff0ff"/><rect x="5.200" y="7.200" width="0.800" height="3.300" fill="#8fb6d8"/><rect x="3.800" y="10.400" width="3.600" height="0.900" rx="0.450" fill="#8fb6d8"/><path d="M6.700 0L11 4.300H7.500c-.44 0-.8-.36-.8-.8z" fill="#e8e8e8"/></svg><span class="t" style="left:30.200px">Gizmo</span></div>
<div class="row" style="left:415px;top:194.7px;width:185px;"><svg style="left:12px;top:4px" width="11" height="14" viewBox="0 0 11 14"><path d="M0 .8C0 .36.360 0 .8 0h5.900L11 4.300v8.900c0 .44-.36.800-.8.800H.8c-.44 0-.8-.36-.8-.8z" fill="#fbfbfb"/><path d="M2.400 3.800h6.400l.9 3.400H1.500z" fill="#2f96ea"/><rect x="3.300" y="4.300" width="4.600" height="2.200" fill="#dff0ff"/><rect x="5.200" y="7.200" width="0.800" height="3.300" fill="#8fb6d8"/><rect x="3.800" y="10.400" width="3.600" height="0.900" rx="0.450" fill="#8fb6d8"/><path d="M6.700 0L11 4.300H7.500c-.44 0-.8-.36-.8-.8z" fill="#e8e8e8"/></svg><span class="t" style="left:30.200px">Sammy</span></div>
<div class="row" style="left:415px;top:216.7px;width:185px;"><svg style="left:12px;top:4px" width="11" height="14" viewBox="0 0 11 14"><path d="M0 .8C0 .36.360 0 .8 0h5.900L11 4.300v8.900c0 .44-.36.800-.8.800H.8c-.44 0-.8-.36-.8-.8z" fill="#f3f3f3"/><path d="M6.700 0L11 4.300H7.500c-.44 0-.8-.36-.8-.8z" fill="#e2e2e2"/></svg><span class="t" style="left:30.200px">Shadow</span><div class="abs" style="left:164px;top:6.700px;width:8.600px;height:8.600px;border-radius:50%;background:#f5a60a"></div></div>
<div class="row" style="left:415px;top:238.7px;width:185px;"><svg style="left:12px;top:4px" width="11" height="14" viewBox="0 0 11 14"><path d="M0 .8C0 .36.360 0 .8 0h5.900L11 4.300v8.900c0 .44-.36.800-.8.800H.8c-.44 0-.8-.36-.8-.8z" fill="#f3f3f3"/><path d="M6.700 0L11 4.300H7.500c-.44 0-.8-.36-.8-.8z" fill="#e2e2e2"/></svg><span class="t" style="left:30.200px">Jake</span></div>
<div class="row" style="left:415px;top:260.7px;width:185px;"><svg style="left:12px;top:4px" width="11" height="14" viewBox="0 0 11 14"><path d="M0 .8C0 .36.360 0 .8 0h5.900L11 4.300v8.900c0 .44-.36.800-.8.800H.8c-.44 0-.8-.36-.8-.8z" fill="#fbfbfb"/><path d="M2.400 3.800h6.400l.9 3.400H1.500z" fill="#2f96ea"/><rect x="3.300" y="4.300" width="4.600" height="2.200" fill="#dff0ff"/><rect x="5.200" y="7.200" width="0.800" height="3.300" fill="#8fb6d8"/><rect x="3.800" y="10.400" width="3.600" height="0.900" rx="0.450" fill="#8fb6d8"/><path d="M6.700 0L11 4.300H7.500c-.44 0-.8-.36-.8-.8z" fill="#e8e8e8"/></svg><span class="t" style="left:30.200px">Toby</span></div>
<div class="pv">
<svg class="abs" style="left:620.500px;top:62px;border-radius:6px" width="268" height="252" viewBox="0 0 268 252">
<defs>
<linearGradient id="pvsky" x1="0" y1="0" x2="0" y2="1"><stop offset="0" stop-color="#0a1e40"/><stop offset="0.500" stop-color="#10294f"/><stop offset="1" stop-color="#1c3c64"/></linearGradient>
<radialGradient id="pvsea" gradientUnits="userSpaceOnUse" cx="50" cy="150" r="175"><stop offset="0" stop-color="#103358"/><stop offset="0.350" stop-color="#0c2848"/><stop offset="0.700" stop-color="#081c38"/><stop offset="1" stop-color="#04112a"/></radialGradient>
<radialGradient id="pvvig" cx="0.450" cy="0.520" r="0.760"><stop offset="0.450" stop-color="#000" stop-opacity="0"/><stop offset="1" stop-color="#020a1a" stop-opacity="0.620"/></radialGradient>
<clipPath id="pvmtn"><path d="M0 47.800L30 44.300 77 45.500 112 42 144.600 39.700 193.700 38.500 233 35 268 33.800V215L256.700 205.300 242.700 191.300 210 184.300 186.700 177.300 168 168 151.700 163.300 130.700 171.500 105 175 93.300 168 81.700 154 74.700 140 46.700 133.500 0 131.800z"/></clipPath>
<filter id="pvter" x="0" y="0" width="100%" height="100%" color-interpolation-filters="sRGB">
  <feTurbulence type="fractalNoise" baseFrequency="0.006 0.024" numOctaves="4" seed="4" result="n"/>
  <feDiffuseLighting in="n" surfaceScale="30" diffuseConstant="1.000" lighting-color="#305a78" result="l"><feDistantLight azimuth="240" elevation="9"/></feDiffuseLighting>
  <feComposite in="l" in2="SourceGraphic" operator="in"/>
</filter>
<filter id="pvsea2" x="0" y="0" width="100%" height="100%" color-interpolation-filters="sRGB">
  <feTurbulence type="fractalNoise" baseFrequency="0.050 0.200" numOctaves="3" seed="5" result="n"/>
  <feColorMatrix in="n" type="matrix" values="0 0 0 0 0.350  0 0 0 0 0.550  0 0 0 0 0.750  0.350 0 0 0 -0.100"/>
  <feComposite in2="SourceGraphic" operator="in"/>
</filter>
<filter id="pvb1"><feGaussianBlur stdDeviation="0.800"/></filter>
<linearGradient id="pvmsh" x1="0" y1="0" x2="0" y2="1"><stop offset="0" stop-color="#16304c" stop-opacity="0.550"/><stop offset="0.300" stop-color="#0c1c2e" stop-opacity="0.350"/><stop offset="1" stop-color="#081420" stop-opacity="0.550"/></linearGradient>
</defs>
<rect width="268" height="62" fill="url(#pvsky)"/>
<rect y="60" width="268" height="192" fill="url(#pvsea)"/>
<rect y="120" width="268" height="132" fill="#fff" filter="url(#pvsea2)" opacity="0.220"/>
<g clip-path="url(#pvmtn)">
<rect width="268" height="252" fill="#0d1d2f"/>
<rect x="-120" y="-120" width="520" height="480" fill="#fff" filter="url(#pvter)" transform="rotate(-38 134 110)" opacity="0.620" style="mix-blend-mode:screen"/>
<rect width="268" height="252" fill="url(#pvmsh)"/>
<path d="M178 160l34 2 30 4 26 8v14l-25-8-33-6-22-4z" fill="#3c4438" opacity="0.700" filter="url(#pvb1)"/>
<path d="M100 166l14-4 20-2 14 2-16 9-24 3z" fill="#24272a" opacity="0.800" filter="url(#pvb1)"/>
</g>
<g filter="url(#pvb1)" fill="none" stroke-linecap="round">
<path d="M74.700 140c2 6 5 10 7 14 3 6 7 10 11.600 14 4 3 8 6 12 7" stroke="#9cc0d8" stroke-width="1.800" opacity="0.650"/>
<path d="M163 158c4 4 6 8 10 12 4 3 9 6 14 8" stroke="#8fb2cc" stroke-width="2" opacity="0.600"/>
<path d="M206 183c6 3 12 5 18 6M242 192c5 5 10 10 15 14 4 3 8 6 11 9" stroke="#86a8c0" stroke-width="2" opacity="0.550"/>
</g>
<rect width="268" height="252" fill="url(#pvvig)"/>
</svg>
<div class="abs" style="left:621px;top:345.500px;font-size:14px;font-weight:700;color:#1d1d1f;letter-spacing:-0.1px;line-height:17px">1b2Rr Aq3Aapz.png</div>
<div class="abs" style="left:621px;top:367px;font-size:13px;color:#7a7a7a;letter-spacing:0.070px;line-height:16px">JPEG Image - 1,4 MB</div>
<div class="abs" style="left:621px;top:388.500px;font-size:13px;font-weight:700;color:#1d1d1f;letter-spacing:-0.14px;line-height:16px">Information</div>
<div class="v" style="right:10.500px;top:389.800px;letter-spacing:-0.18px;line-height:14px;color:#4a4a4a">Show More</div>
<div class="k" style="left:621px;top:410.600px;letter-spacing:-0.16px;line-height:14px">Created</div>
<div class="v" style="right:10.500px;top:409.700px;letter-spacing:-0.27px;line-height:14px;white-space:pre">18 November 2019 at  18.51</div>
<div class="abs" style="left:620.500px;top:430px;width:268px;height:1px;background:#dedede"></div>
<div class="k" style="left:621px;top:436.600px;letter-spacing:-0.16px;line-height:14px">Modified</div>
<div class="v" style="right:10.500px;top:435.700px;letter-spacing:-0.27px;line-height:14px;white-space:pre">18 November 2019 at  18.51</div>
<div class="abs" style="left:620.500px;top:455px;width:268px;height:1px;background:#dedede"></div>
<svg class="abs" style="left:672px;top:507.500px;overflow:visible" width="18" height="19" viewBox="0 0 18 19" fill="none" stroke="#b2b2b2" stroke-width="1.200" stroke-linecap="round" stroke-linejoin="round"><rect x=".8" y="6.500" width="11.400" height="11.400" rx="2"/><path d="M10.200 2.100c3 0 5.800 1.800 5.800 5.400"/><path d="M12 .6l-2 1.600 2 1.700"/></svg>
<svg class="abs" style="left:750.500px;top:510px" width="16.500" height="16.500" viewBox="0 0 16.500 16.500" fill="none" stroke="#b2b2b2" stroke-width="1.200" stroke-linecap="round" stroke-linejoin="round"><circle cx="8.250" cy="8.250" r="7.500"/><path d="M5.600 12.600l2.650-8.200 2.650 8.200M6.500 10.200c1 1 2.500 1 3.500 0"/></svg>
<svg class="abs" style="left:827px;top:510px" width="16.500" height="16.500" viewBox="0 0 16.500 16.500" fill="none" stroke="#b2b2b2" stroke-width="1.200"><circle cx="8.250" cy="8.250" r="7.500"/><g fill="#b2b2b2" stroke="none"><circle cx="4.800" cy="8.250" r="1"/><circle cx="8.250" cy="8.250" r="1"/><circle cx="11.700" cy="8.250" r="1"/></g></svg>
<div class="abs" style="left:650.700px;top:533px;letter-spacing:0.270px;color:#b2b2b2;line-height:14px">Rotate Left</div>
<div class="abs" style="left:737.500px;top:533px;letter-spacing:0.250px;color:#b2b2b2;line-height:14px">Markup</div>
<div class="abs" style="left:815.500px;top:533px;letter-spacing:0.350px;color:#b2b2b2;line-height:14px">More...</div>
</div>
<div class="pathbar" style="left:202px;top:572px;width:697px">
<svg style="left:12.2px;top:7.7px" width="13.6" height="11.2" viewBox="0 0 15 12.3"><path d="M0 1.700C0 .76.760 0 1.700 0h3.100c.55 0 1 .2 1.350.6l.75.850h6.400c.94 0 1.700.76 1.700 1.700v7.450c0 .94-.76 1.700-1.700 1.700H1.700c-.94 0-1.700-.76-1.700-1.700z" fill="#4fa9ec"/><path d="M0 3.700c0-.72.580-1.300 1.300-1.300h12.400c.72 0 1.300.58 1.300 1.300v6.900c0 .94-.76 1.700-1.700 1.700H1.700c-.94 0-1.700-.76-1.700-1.700z" fill="#74c6f7"/></svg>
<span style="left:30.600000000000023px;letter-spacing:-0.15px">First Folder</span>
<svg style="left:90.8px;top:10.8px" width="4.6" height="8" viewBox="0 0 4.6 8" fill="none" stroke="#a8a8a8" stroke-width="1.1" stroke-linecap="round" stroke-linejoin="round"><path d="M0.800 0.800L3.8 4.0L0.800 7.2"/></svg>
<svg style="left:102px;top:7.7px" width="13.6" height="11.2" viewBox="0 0 15 12.3"><path d="M0 1.700C0 .76.760 0 1.700 0h3.100c.55 0 1 .2 1.350.6l.75.850h6.400c.94 0 1.700.76 1.700 1.700v7.450c0 .94-.76 1.700-1.700 1.700H1.700c-.94 0-1.700-.76-1.700-1.700z" fill="#4fa9ec"/><path d="M0 3.700c0-.72.580-1.300 1.300-1.300h12.400c.72 0 1.300.58 1.300 1.300v6.900c0 .94-.76 1.700-1.700 1.700H1.700c-.94 0-1.700-.76-1.700-1.700z" fill="#74c6f7"/></svg>
<span style="left:120.5px;letter-spacing:-0.17px">Second Folder</span>
<svg style="left:196.4px;top:10.8px" width="4.6" height="8" viewBox="0 0 4.6 8" fill="none" stroke="#a8a8a8" stroke-width="1.1" stroke-linecap="round" stroke-linejoin="round"><path d="M0.800 0.800L3.8 4.0L0.800 7.2"/></svg>
<svg style="left:207.8px;top:7.7px" width="13.6" height="11.2" viewBox="0 0 15 12.3"><path d="M0 1.700C0 .76.760 0 1.700 0h3.100c.55 0 1 .2 1.350.6l.75.850h6.400c.94 0 1.700.76 1.700 1.700v7.450c0 .94-.76 1.700-1.700 1.700H1.700c-.94 0-1.700-.76-1.700-1.700z" fill="#4fa9ec"/><path d="M0 3.700c0-.72.580-1.300 1.300-1.300h12.400c.72 0 1.300.58 1.300 1.300v6.900c0 .94-.76 1.700-1.700 1.700H1.700c-.94 0-1.700-.76-1.700-1.700z" fill="#74c6f7"/></svg>
<span style="left:226.39999999999998px;letter-spacing:-0.14px">Third Folder</span>
<svg style="left:291px;top:10.8px" width="4.6" height="8" viewBox="0 0 4.6 8" fill="none" stroke="#a8a8a8" stroke-width="1.1" stroke-linecap="round" stroke-linejoin="round"><path d="M0.800 0.800L3.8 4.0L0.800 7.2"/></svg>
<svg style="left:304.5px;top:9px" width="9" height="9" viewBox="0 0 9 9"><rect x="0.500" y="4.500" width="2" height="3.500" fill="#f04a3c"/><rect x="2.600" y="3" width="2" height="5" fill="#f59a23"/><rect x="4.700" y="1" width="2" height="7" fill="#34c759"/><rect x="6.800" y="3.500" width="1.700" height="4.500" fill="#2f9bf0"/></svg>
<span style="left:319.6px;letter-spacing:-0.3px">My File</span>
</div>
</div>
<div id="dock">
<svg class="di" style="left:10.5px" width="49" height="49" viewBox="0 0 49 49"><defs><linearGradient id="fla" x1="0" y1="0" x2="0" y2="1"><stop offset="0" stop-color="#20b4fa"/><stop offset="1" stop-color="#1d6cf0"/></linearGradient><linearGradient id="fra" x1="0" y1="0" x2="0" y2="1"><stop offset="0" stop-color="#f4f5f8"/><stop offset="1" stop-color="#d9dfe9"/></linearGradient><clipPath id="fca"><rect width="49" height="49" rx="11"/></clipPath></defs><g clip-path="url(#fca)"><rect width="49" height="49" fill="url(#fla)"/><path d="M24.500 0H49v49H29.500c-1.600-6-2.300-12-2.500-18.500h-7.500c.3-10.500 2-21 5-30.500z" fill="url(#fra)"/></g><path d="M12.700 14v4M33.500 14v4" stroke="#16213a" stroke-width="1.700" stroke-linecap="round"/><path d="M9 33c4.500 4 10 5.800 15.800 5.800S35.800 37 39.800 33" stroke="#16213a" stroke-width="1.600" fill="none" stroke-linecap="round"/></svg>
<div class="dd" style="left:33px"></div>
<svg class="di" style="left:72.5px" width="49" height="49" viewBox="0 0 49 49"><circle cx="24.500" cy="24.500" r="24.500" fill="#fff" opacity="0"/><path d="M24.500 24.500L3.300 12.250A24.500 24.500 0 0 1 45.700 12.250z" fill="#e24a3a"/><path d="M24.500 24.500L45.700 12.250A24.500 24.500 0 0 1 24.500 49z" fill="#fbcb3c"/><path d="M24.500 24.500L24.500 49A24.500 24.500 0 0 1 3.300 12.250z" fill="#2a9f58"/><path d="M24.500 13.500H46.300A24.500 24.500 0 0 0 3.300 12.250L14 30z" fill="#e24a3a"/><path d="M34 30L23 49A24.500 24.500 0 0 0 46.300 13.500H24.500z" fill="#fbcb3c"/><path d="M15 30L3.300 12.250A24.500 24.500 0 0 0 23 49L34 30z" fill="#2a9f58"/><circle cx="24.500" cy="24.500" r="11.200" fill="#fff"/><circle cx="24.500" cy="24.500" r="9" fill="#4a86ee"/></svg>
<div class="dd" style="left:95px"></div>
<svg class="di" style="left:134.5px" width="49" height="49" viewBox="0 0 49 49"><defs><linearGradient id="msg" x1="0" y1="0" x2="0" y2="1"><stop offset="0" stop-color="#5df070"/><stop offset="1" stop-color="#10c83a"/></linearGradient><radialGradient id="msb" cx="0.450" cy="0.350" r="0.700"><stop offset="0" stop-color="#ffffff"/><stop offset="0.700" stop-color="#e8f6ea"/><stop offset="1" stop-color="#bfe8c6"/></radialGradient></defs><rect width="49" height="49" rx="11" fill="url(#msg)"/><path d="M24.500 8.500c10 0 18 6.300 18 14.200s-8 14.200-18 14.200c-1.800 0-3.500-.2-5.100-.6-1.700 1.700-4 2.900-6.700 3.200 1.300-1.400 2-3 2.200-4.800-5-2.500-8.400-7-8.400-12 0-7.900 8-14.200 18-14.200z" fill="url(#msb)"/></svg>
<div class="dd" style="left:157px"></div>
<svg class="di" style="left:196.5px" width="49" height="49" viewBox="0 0 49 49"><defs><linearGradient id="clg" x1="0" y1="0" x2="0" y2="1"><stop offset="0" stop-color="#e2e2e2"/><stop offset="1" stop-color="#c9c9c9"/></linearGradient></defs><rect width="49" height="49" rx="11" fill="url(#clg)"/><rect x="11.300" y="6.300" width="27" height="37.700" rx="3.500" fill="#25262a"/><rect x="14" y="9" width="21.600" height="8.400" rx="1.200" fill="#46484d"/><circle cx="17" cy="22.5" r="2.500" fill="#dcdcdc"/><circle cx="24.6" cy="22.5" r="2.500" fill="#dcdcdc"/><circle cx="17" cy="30.2" r="2.500" fill="#dcdcdc"/><circle cx="24.6" cy="30.2" r="2.500" fill="#dcdcdc"/><circle cx="32.300" cy="22.5" r="2.600" fill="#ff9f0a"/><circle cx="32.300" cy="30.2" r="2.600" fill="#ff9f0a"/><circle cx="32.300" cy="37.8" r="2.600" fill="#ff9f0a"/><rect x="14.300" y="35.400" width="12.800" height="4.900" rx="2.400" fill="#dcdcdc"/></svg>
<div class="dd" style="left:219px"></div>
<svg class="di" style="left:258.5px" width="49" height="49" viewBox="0 0 49 49"><defs><clipPath id="calc"><rect width="49" height="49" rx="11"/></clipPath></defs><g clip-path="url(#calc)"><rect width="49" height="49" fill="#fbfbfb"/><rect width="49" height="15.500" fill="#f5524c"/></g><text x="24.500" y="11.800" text-anchor="middle" font-family="Liberation Sans, sans-serif" font-size="10.500" font-weight="700" fill="#fff" letter-spacing="0.1">JUN</text><text x="24.500" y="41.500" text-anchor="middle" font-family="Liberation Sans, sans-serif" font-size="30" fill="#2b2b2d" stroke="#fbfbfb" stroke-width="0.900" letter-spacing="-0.6">29</text></svg>
<div class="dd" style="left:281px"></div>
<svg class="di" style="left:320.5px" width="49" height="49" viewBox="0 0 49 49"><defs><linearGradient id="ctg" x1="0" y1="0" x2="0" y2="1"><stop offset="0" stop-color="#c29a58"/><stop offset="1" stop-color="#a97e3e"/></linearGradient></defs><rect x="42" y="8" width="7" height="10" rx="2" fill="#dcdcdc"/><rect x="42" y="17" width="7" height="9" fill="#59b8f0"/><rect x="42" y="26" width="7" height="8" fill="#f59a2a"/><rect x="42" y="34" width="7" height="8" rx="2" fill="#59c86a"/><rect x="0.500" y="0.500" width="46.500" height="48" rx="11" fill="url(#ctg)"/><circle cx="24" cy="24" r="13.500" fill="#b48a48" stroke="#a27a3c" stroke-width="1.200"/><circle cx="24" cy="20" r="4.600" fill="#9f783a"/><path d="M13.800 32.500c2-4.600 5.800-6.300 10.200-6.300s8.200 1.700 10.200 6.300c-2.500 3-6 5-10.200 5s-7.700-2-10.200-5z" fill="#9f783a"/></svg>
<div class="dd" style="left:343px"></div>
<svg class="di" style="left:382.5px" width="49" height="49" viewBox="0 0 49 49"><defs><linearGradient id="asg" x1="0" y1="0" x2="0" y2="1"><stop offset="0" stop-color="#1fb0f8"/><stop offset="1" stop-color="#1a66ea"/></linearGradient></defs><rect width="49" height="49" rx="11" fill="url(#asg)"/><g stroke="#fff" stroke-width="3.400" stroke-linecap="round" fill="none"><path d="M20.300 10.500L33.800 34"/><path d="M28.500 10.500L13.500 36.500"/><path d="M8.500 30.500h18.500"/><path d="M32.500 30.500h8"/><path d="M11.200 36.500l-1 1.800"/></g></svg>
<div class="dd" style="left:405px"></div>
<svg class="di" style="left:444.5px" width="49" height="49" viewBox="0 0 49 49"><defs><linearGradient id="spg" x1="0" y1="0" x2="0" y2="1"><stop offset="0" stop-color="#dfe3e6"/><stop offset="1" stop-color="#8e9396"/></linearGradient><linearGradient id="spg2" x1="0" y1="0" x2="0" y2="1"><stop offset="0" stop-color="#a2a6aa"/><stop offset="1" stop-color="#72767a"/></linearGradient></defs><rect width="49" height="49" rx="11" fill="url(#spg)"/><circle cx="24.500" cy="24.500" r="20.500" fill="#5e6266"/><circle cx="24.500" cy="24.500" r="20.500" fill="none" stroke="#4a4d50" stroke-width="2" stroke-dasharray="1.200 1.200"/><circle cx="24.500" cy="24.500" r="17" fill="url(#spg2)"/><circle cx="24.500" cy="24.500" r="14.800" fill="none" stroke="#505356" stroke-width="2.600"/><circle cx="24.500" cy="24.500" r="10.500" fill="#8a8e92"/><g stroke="#484b4e" stroke-width="2.600" stroke-linecap="round"><path d="M24.500 24.500V9.700"/><path d="M24.500 24.500l12.800 7.400"/><path d="M24.500 24.500l-12.800 7.400"/></g><circle cx="24.500" cy="24.500" r="3" fill="#3f4245"/></svg>
<div class="dd" style="left:467px"></div>
<svg class="di" style="left:533.3px" width="49" height="49" viewBox="0 0 49 49"><defs><linearGradient id="mlg" x1="0" y1="0" x2="0" y2="1"><stop offset="0" stop-color="#1f8cf8"/><stop offset="1" stop-color="#17c0fb"/></linearGradient><linearGradient id="mle" x1="0" y1="0" x2="0" y2="1"><stop offset="0" stop-color="#ffffff"/><stop offset="1" stop-color="#dedede"/></linearGradient></defs><rect width="49" height="49" rx="11" fill="url(#mlg)"/><rect x="7" y="14.200" width="35" height="21.500" rx="3" fill="url(#mle)"/><path d="M8 15.500l14 12c1.500 1.300 3.500 1.300 5 0l14-12" stroke="#b9b9b9" stroke-width="1.300" fill="none"/><path d="M8 34.500l11.500-10M41 34.500l-11.500-10" stroke="#cfcfcf" stroke-width="1.100" fill="none"/></svg>
<div class="dd" style="left:555.8px"></div>
<svg class="di" style="left:595.5px" width="49" height="49" viewBox="0 0 49 49"><defs><linearGradient id="sfg" x1="0" y1="0" x2="0" y2="1"><stop offset="0" stop-color="#ffffff"/><stop offset="1" stop-color="#dcdcdc"/></linearGradient><linearGradient id="sfb" x1="0" y1="0" x2="0" y2="1"><stop offset="0" stop-color="#28a4f4"/><stop offset="1" stop-color="#1f6fe6"/></linearGradient></defs><rect width="49" height="49" rx="11" fill="url(#sfg)"/><circle cx="24.500" cy="24.500" r="20.500" fill="url(#sfb)"/><circle cx="24.500" cy="24.500" r="18" fill="none" stroke="#bfe0fb" stroke-width="2.200" stroke-dasharray="0.700 1.870" opacity="0.850"/><path d="M38.500 10.500L22.300 22.300l4.400 4.400z" fill="#f5453c"/><path d="M10.500 38.500l16.200-11.800-4.400-4.400z" fill="#f3f3f3"/></svg>
<div class="dd" style="left:618px"></div>
<svg class="di" style="left:684.3px" width="49" height="49" viewBox="0 0 49 49"><defs><linearGradient id="flb" x1="0" y1="0" x2="0" y2="1"><stop offset="0" stop-color="#20b4fa"/><stop offset="1" stop-color="#1d6cf0"/></linearGradient><linearGradient id="frb" x1="0" y1="0" x2="0" y2="1"><stop offset="0" stop-color="#f4f5f8"/><stop offset="1" stop-color="#d9dfe9"/></linearGradient><clipPath id="fcb"><rect width="49" height="49" rx="11"/></clipPath></defs><g clip-path="url(#fcb)"><rect width="49" height="49" fill="url(#flb)"/><path d="M24.500 0H49v49H29.500c-1.600-6-2.300-12-2.500-18.500h-7.500c.3-10.500 2-21 5-30.500z" fill="url(#frb)"/></g><path d="M12.700 14v4M33.500 14v4" stroke="#16213a" stroke-width="1.700" stroke-linecap="round"/><path d="M9 33c4.500 4 10 5.800 15.800 5.800S35.800 37 39.800 33" stroke="#16213a" stroke-width="1.600" fill="none" stroke-linecap="round"/></svg>
<div class="dd" style="left:706.8px"></div>
<svg class="di" style="left:746.5px" width="49" height="49" viewBox="0 0 49 49"><defs><linearGradient id="trg" x1="0" y1="0" x2="1" y2="0"><stop offset="0" stop-color="#e4e4e6"/><stop offset="0.350" stop-color="#fafafa"/><stop offset="0.750" stop-color="#f0f0f2"/><stop offset="1" stop-color="#d8d8dc"/></linearGradient></defs><path d="M4.300 4.500L9.700 45c.3 2.200 6.500 3.500 14.800 3.500s14.500-1.300 14.800-3.500L44.700 4.500z" fill="url(#trg)" opacity="0.880"/><ellipse cx="24.500" cy="4.500" rx="20.200" ry="3.700" fill="#f4f4f6"/><ellipse cx="24.500" cy="4.800" rx="18.500" ry="2.800" fill="#e6d6e2"/></svg>
<div class="dd" style="left:769px"></div>
<div class="ds" style="left:513.500px"></div><div class="ds" style="left:664.500px"></div>
</div>
</body></html>
